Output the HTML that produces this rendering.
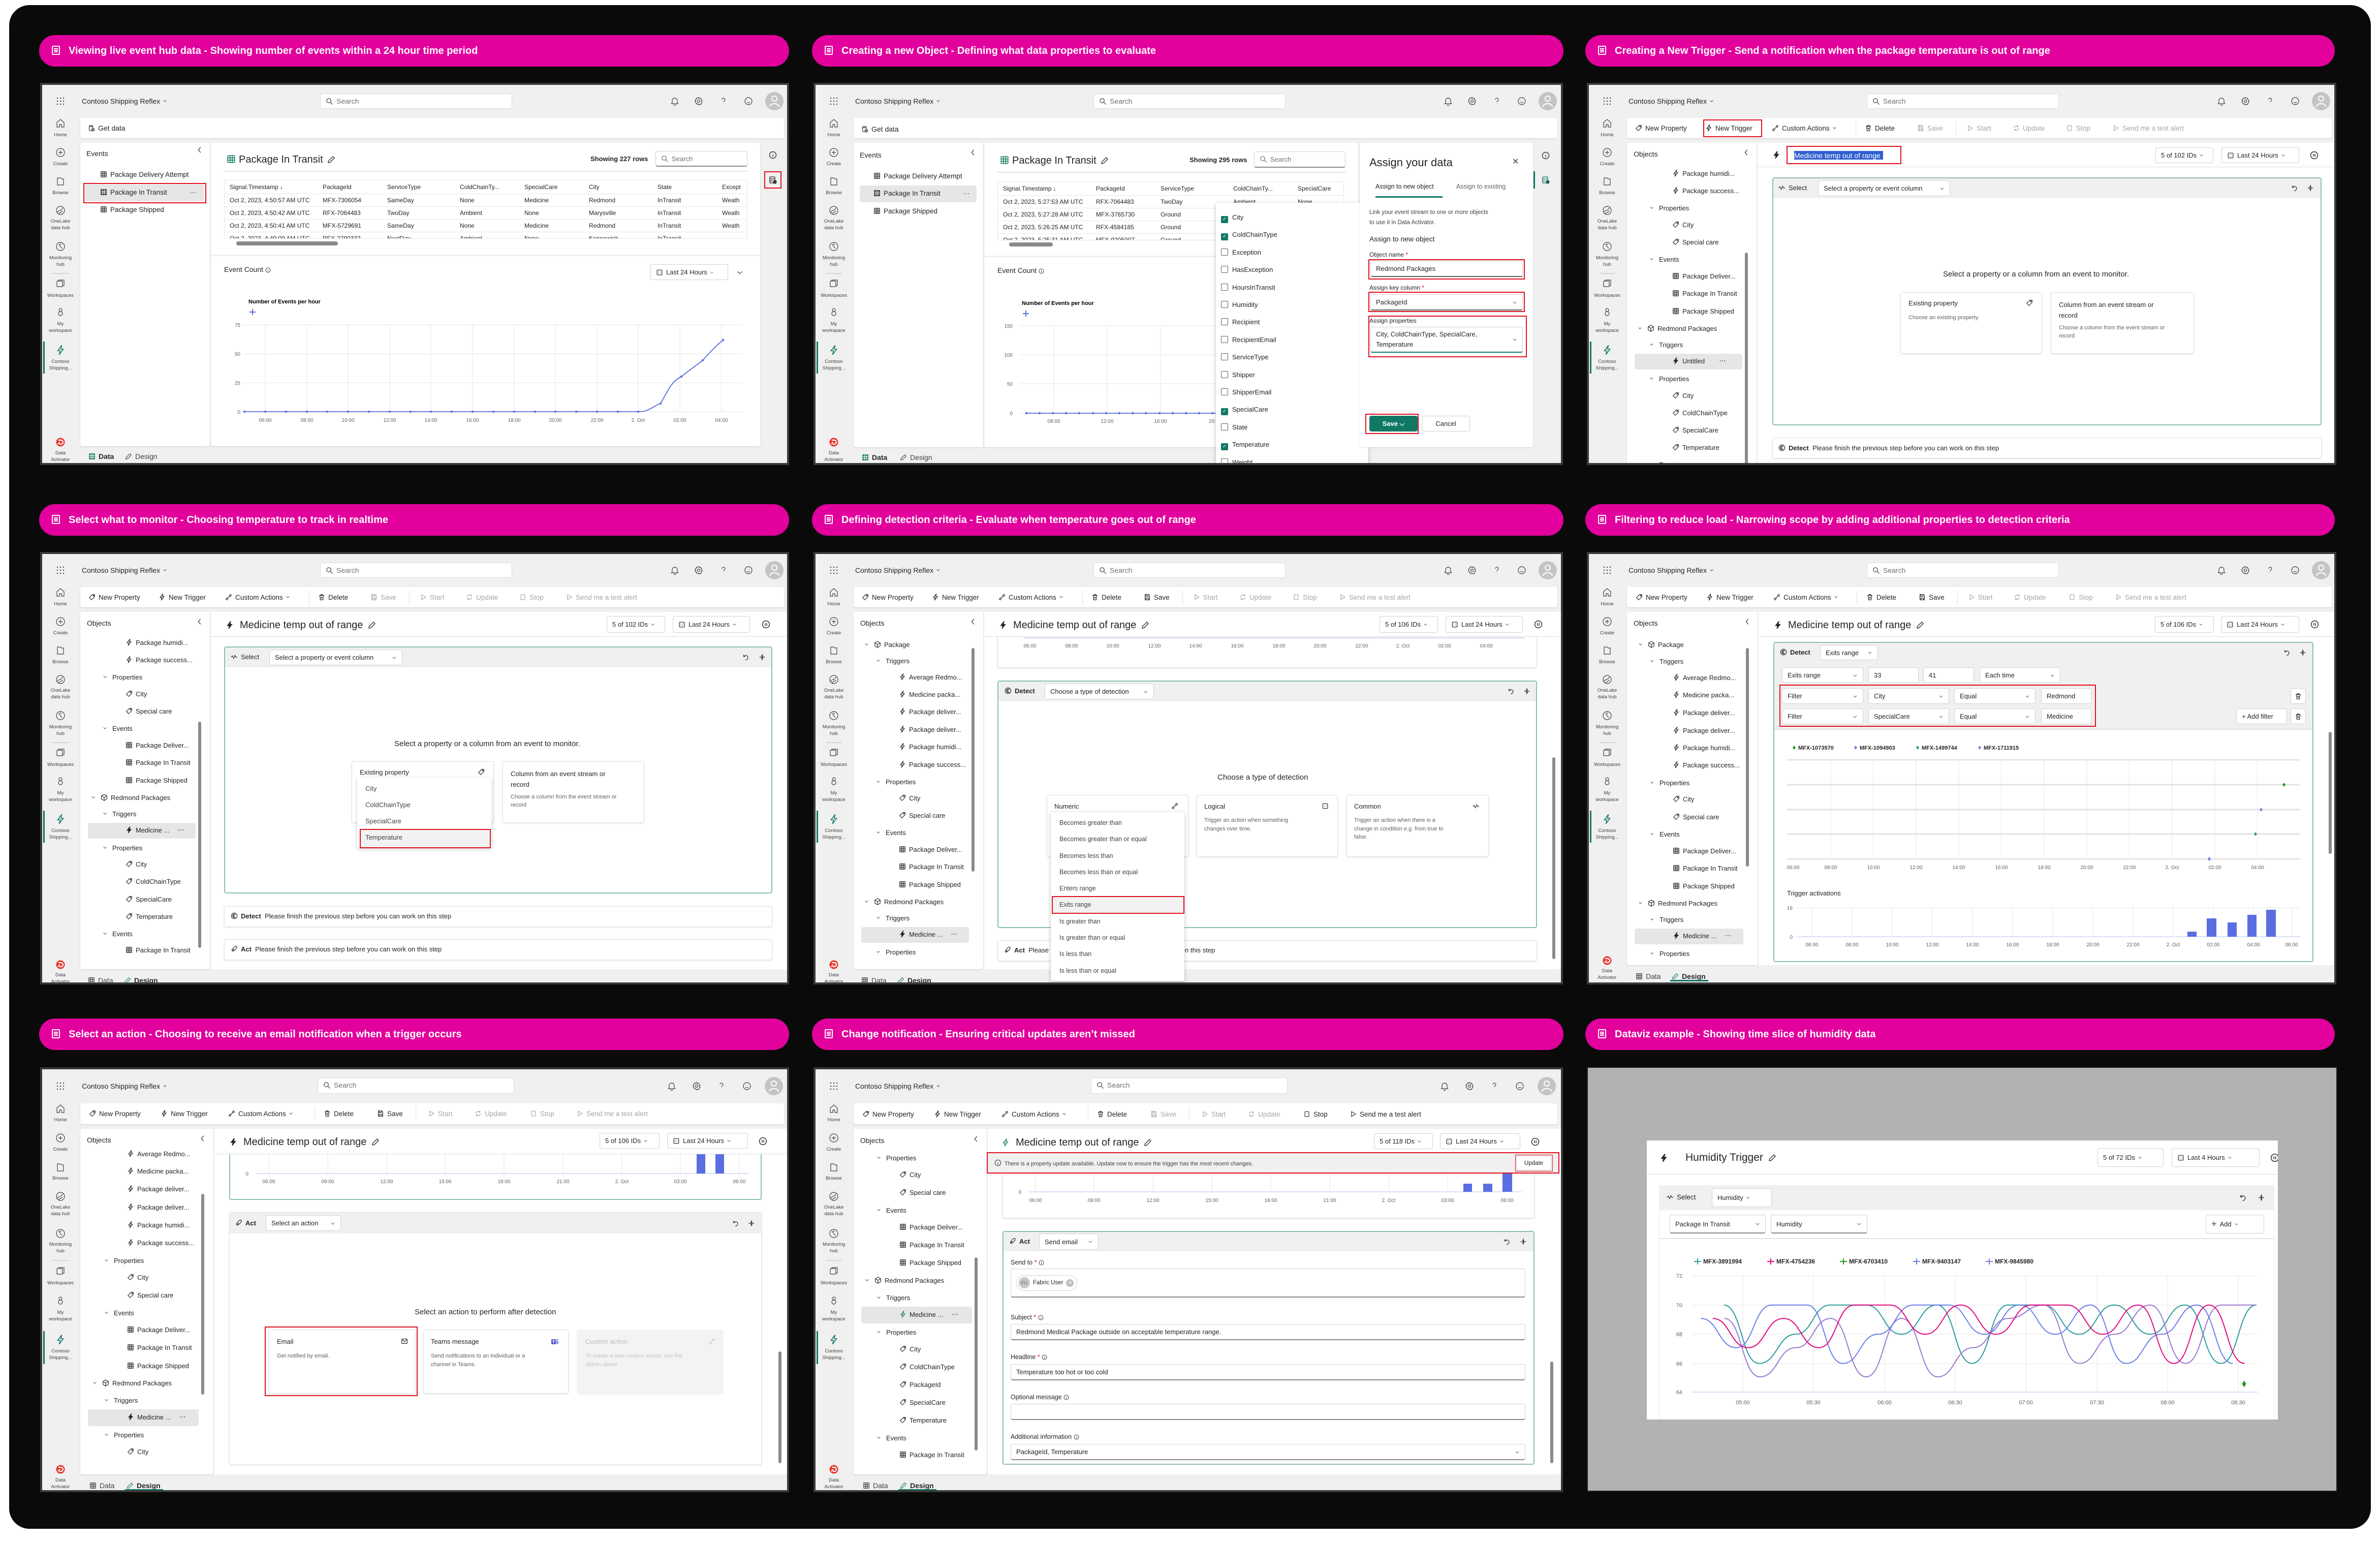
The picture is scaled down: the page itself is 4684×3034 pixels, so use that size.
<!DOCTYPE html>
<html><head><meta charset="utf-8">
<style>
*{box-sizing:border-box}
body{margin:0;width:4684px;height:3034px;background:#fff;position:relative;overflow:hidden;font-family:"Liberation Sans",sans-serif;color:#242424}
.frame{position:absolute;left:18px;top:10px;width:4648px;height:2998px;background:#0a0a0a;border-radius:40px}
.hd{position:absolute;height:62px;border-radius:31px;background:#e2019d;color:#fff;font-weight:bold;font-size:20px;line-height:62px;padding-left:58px;white-space:nowrap}
.hd svg{position:absolute;left:24px;top:20px;width:20px;height:22px;fill:none;stroke:#fff;stroke-width:2}
.pn{position:absolute;background:#f0f0f0;border:4px solid #3a3a3a;overflow:hidden;font-size:13px}
.a{position:absolute}
.t{position:absolute;white-space:nowrap;line-height:16px}
svg{overflow:visible}
.t svg,.i{width:14px;height:14px;fill:none;stroke:currentColor;stroke-width:1.3;vertical-align:-2px;margin-right:6px}
.t svg.ch,.ch{width:9px;height:9px;margin:0 0 0 5px;vertical-align:1px}
.t svg.cl{width:9px;height:9px;margin-right:10px;vertical-align:1px}
.wc{position:absolute;background:#fff;border-radius:4px;box-shadow:0 1px 2px rgba(0,0,0,.14)}
.bx{position:absolute;background:#fff;border:1px solid #d1d1d1;border-radius:4px;white-space:nowrap;padding:0 10px;display:flex;align-items:center;font-size:13px}
.bx .cv{margin-left:auto;width:10px;height:10px;fill:none;stroke:#424242;stroke-width:1.4}
.rb{position:absolute;border:2.5px solid #e3101e}
.nv{position:absolute;left:26px;width:20px;height:20px;fill:none;stroke:#424242;stroke-width:1.2}
.nl{position:absolute;left:0;width:72px;text-align:center;font-size:9.5px;color:#424242;line-height:13px}
.ti{position:absolute;top:23px;width:18px;height:18px;fill:none;stroke:#424242;stroke-width:1.2}
.sb{position:absolute;left:547px;top:17px;width:378px;height:30px;background:#fff;border:1px solid #dcdcdc;border-radius:4px;color:#707070;font-size:14px;line-height:28px;padding-left:10px}
.sb svg{width:15px;height:15px;fill:none;stroke:#424242;stroke-width:1.3;vertical-align:-3px;margin-right:6px}
.av{position:absolute;left:1423px;top:14px;width:36px;height:36px;border-radius:50%;background:#c4c4c4}
.g{color:#a6a6a6}
.sel{position:absolute;left:90px;width:212px;height:31px;background:#e6e6e6;border-radius:4px}
.d{color:#616161;font-size:11px}
.gr{stroke:#e6e6e6;stroke-width:1}
.ax{font-size:10px;fill:#616161;font-family:"Liberation Sans",sans-serif}
.cd{position:absolute;background:#fff;border:1px solid #e3e3e3;border-radius:4px;box-shadow:0 1px 3px rgba(0,0,0,.12)}
.band{position:absolute;background:#f0f0f0}
.b{font-weight:bold}
</style></head><body>
<svg width="0" height="0" style="position:absolute">
<defs>
<symbol id="tag" viewBox="0 0 16 16"><path d="M9 2h5v5l-7 7-5-5z"/><circle cx="11.3" cy="4.7" r=".9"/></symbol>
<symbol id="bolt" viewBox="0 0 16 16"><path d="M9.5 1L3.5 9h4l-1.5 6 6.5-8.5h-4L10 1z"/></symbol>
<symbol id="boltf" viewBox="0 0 16 16"><path d="M9.5 1L3.5 9h4l-1.5 6 6.5-8.5h-4L10 1z" fill="currentColor"/></symbol>
<symbol id="grid" viewBox="0 0 16 16"><rect x="2" y="2" width="12" height="12" rx="1"/><path d="M2 6h12M2 10h12M6 2v12M10 2v12"/></symbol>
<symbol id="gridf" viewBox="0 0 16 16"><rect x="2" y="2" width="12" height="12" rx="1" fill="currentColor"/><path d="M2 6h12M2 10h12M6 2v12M10 2v12" stroke="#fff"/></symbol>
<symbol id="obj" viewBox="0 0 16 16"><path d="M8 1l6 3.5v7L8 15 2 11.5v-7zM2 4.5L8 8l6-3.5M8 8v7"/></symbol>
<symbol id="chev" viewBox="0 0 16 16"><path d="M3 6l5 5 5-5"/></symbol>
<symbol id="chevl" viewBox="0 0 16 16"><path d="M10 2L5 8l5 6"/></symbol>
<symbol id="home" viewBox="0 0 20 20"><path d="M3 9l7-6 7 6v9h-5v-5H8v5H3z"/></symbol>
<symbol id="plus" viewBox="0 0 20 20"><circle cx="10" cy="10" r="8"/><path d="M10 6v8M6 10h8"/></symbol>
<symbol id="browse" viewBox="0 0 20 20"><path d="M4 3h6l2 2h4v12H4z"/></symbol>
<symbol id="lake" viewBox="0 0 20 20"><circle cx="10" cy="10" r="8"/><path d="M4 14c2-6 8-2 10-9M7 17c1-4 6-3 7-6"/></symbol>
<symbol id="mon" viewBox="0 0 20 20"><circle cx="10" cy="10" r="8"/><path d="M7 6l6 8M8 6a3 3 0 014 0"/></symbol>
<symbol id="ws" viewBox="0 0 20 20"><rect x="3" y="5" width="11" height="11" rx="1"/><path d="M6 5V3h11v11h-3"/></symbol>
<symbol id="me" viewBox="0 0 20 20"><circle cx="10" cy="6" r="3"/><circle cx="10" cy="13" r="4"/></symbol>
<symbol id="srch" viewBox="0 0 16 16"><circle cx="6.5" cy="6.5" r="4.5"/><path d="M10 10l4.5 4.5"/></symbol>
<symbol id="bell" viewBox="0 0 18 18"><path d="M4 12V8a5 5 0 0110 0v4l1.5 2h-13zM7 15.5a2 2 0 004 0"/></symbol>
<symbol id="gear" viewBox="0 0 18 18"><circle cx="9" cy="9" r="2.5"/><path d="M9 1.5l1.6 2.2 2.6-.6.6 2.6 2.2 1.6-1.4 2.2 1.4 2.2-2.2 1.6-.6 2.6-2.6-.6L9 16.5l-1.6-2.2-2.6.6-.6-2.6-2.2-1.6L3.4 9 2 6.8l2.2-1.6.6-2.6 2.6.6z"/></symbol>
<symbol id="help" viewBox="0 0 18 18"><path d="M6 6a3 3 0 116 0c0 2-3 2.5-3 5M9 14.5v.5"/></symbol>
<symbol id="smile" viewBox="0 0 18 18"><circle cx="9" cy="9" r="7"/><path d="M6 11c1.5 1.5 4.5 1.5 6 0M6.5 7v.5M11.5 7v.5"/></symbol>
<symbol id="pers" viewBox="0 0 36 36"><circle cx="18" cy="13" r="5"/><path d="M9 29c0-8 18-8 18 0"/></symbol>
<symbol id="waf" viewBox="0 0 16 16"><g fill="currentColor" stroke="none"><circle cx="2" cy="2" r="1.2"/><circle cx="8" cy="2" r="1.2"/><circle cx="14" cy="2" r="1.2"/><circle cx="2" cy="8" r="1.2"/><circle cx="8" cy="8" r="1.2"/><circle cx="14" cy="8" r="1.2"/><circle cx="2" cy="14" r="1.2"/><circle cx="8" cy="14" r="1.2"/><circle cx="14" cy="14" r="1.2"/></g></symbol>
<symbol id="cal" viewBox="0 0 16 16"><rect x="2.5" y="2.5" width="11" height="11" rx="1.5"/><path d="M5.5 6.5h1M9.5 6.5h1M5.5 9.5h1M9.5 9.5h1"/></symbol>
<symbol id="pen" viewBox="0 0 16 16"><path d="M11 2l3 3-8.5 8.5L2 14l.5-3.5z"/></symbol>
<symbol id="trash" viewBox="0 0 16 16"><path d="M2.5 4h11M6 4V2h4v2M4 4l1 10h6l1-10M7 7v4M9 7v4"/></symbol>
<symbol id="disk" viewBox="0 0 16 16"><path d="M3 2h8l2 2v10H3zM5 2v4h5V2M5 14v-4h6v4"/></symbol>
<symbol id="play" viewBox="0 0 16 16"><path d="M4.5 2.5l9 5.5-9 5.5z"/></symbol>
<symbol id="upd" viewBox="0 0 16 16"><path d="M13 8a5 5 0 01-9 3M3 8a5 5 0 019-3M12 2v3H9M4 14v-3h3"/></symbol>
<symbol id="stop" viewBox="0 0 16 16"><rect x="3.5" y="2.5" width="9" height="11" rx="1"/></symbol>
<symbol id="info" viewBox="0 0 16 16"><circle cx="8" cy="8" r="6.5"/><path d="M8 7v4.5M8 4.5v.5"/></symbol>
<symbol id="pause" viewBox="0 0 16 16"><circle cx="8" cy="8" r="6.5"/><path d="M6.5 5.5v5M9.5 5.5v5"/></symbol>
<symbol id="undo" viewBox="0 0 16 16"><path d="M4 2.5v4h4M4.3 6.5A5 5 0 118 14"/></symbol>
<symbol id="coll" viewBox="0 0 16 16"><path d="M8 1v5M6 4.5L8 6.5l2-2M2 8h12M8 15v-5M6 11.5l2-2 2 2"/></symbol>
<symbol id="wave" viewBox="0 0 16 16"><path d="M1 9l2.5-3 3 6 3-7 2 4h3.5"/></symbol>
<symbol id="det" viewBox="0 0 16 16"><circle cx="8" cy="8" r="6.5"/><path d="M11 5a4 4 0 100 6M9.5 6.5a2 2 0 100 3"/></symbol>
<symbol id="act" viewBox="0 0 16 16"><path d="M9 2.5c2.5-1 4.5-.5 4.5-.5s.5 2-.5 4.5L8 11.5 4.5 8zM5 9l-2.5 1.5 1 1M7 11l-1.5 2.5-1-1M3 13l2-2"/></symbol>
<symbol id="custom" viewBox="0 0 16 16"><circle cx="4" cy="12" r="2"/><circle cx="12" cy="4" r="2"/><path d="M5.5 10.5l5-5"/></symbol>
<symbol id="mail" viewBox="0 0 16 16"><rect x="2" y="3" width="12" height="10" rx="1"/><path d="M2 4.5l6 4.5 6-4.5"/></symbol>
<symbol id="db" viewBox="0 0 16 16"><path d="M3 3.5c0-2 8-2 8 0v9c0 2-8 2-8 0zM3 3.5c0 2 8 2 8 0"/><circle cx="11.5" cy="11.5" r="3" fill="#fff"/><path d="M11.5 10v3M10 11.5h3"/></symbol>
<symbol id="tadd" viewBox="0 0 16 16"><rect x="2" y="2" width="10" height="12" rx="1"/><path d="M2 6h10M2 10h6"/><circle cx="12" cy="12" r="3" fill="#424242"/></symbol>
<symbol id="note" viewBox="0 0 20 22"><rect x="2" y="2" width="14" height="16" rx="1"/><path d="M5 7h8M5 10h8M5 13h8"/></symbol>
<symbol id="da" viewBox="0 0 20 20"><circle cx="10" cy="10" r="8.5" fill="#e8372c" stroke="none"/><path d="M6 6h5a4 4 0 010 8H8" stroke="#fff" stroke-width="2.2" fill="none"/><path d="M5 14l4-4" stroke="#fff" stroke-width="2"/></symbol>
<symbol id="dots" viewBox="0 0 16 16"><g fill="currentColor" stroke="none"><circle cx="3" cy="8" r="1"/><circle cx="8" cy="8" r="1"/><circle cx="13" cy="8" r="1"/></g></symbol>
<symbol id="teams" viewBox="0 0 16 16"><rect x="1" y="3" width="9" height="10" rx="1" fill="#5b5fc7" stroke="none"/><path d="M3.5 6h4M5.5 6v5" stroke="#fff" stroke-width="1.4"/><circle cx="12.5" cy="4.5" r="1.8" fill="#7b83eb" stroke="none"/><rect x="10.5" y="7" width="4.5" height="5" rx="1.5" fill="#7b83eb" stroke="none"/></symbol>
</defs></svg>

<div class="frame"></div>

<!-- headers -->
<div class="hd" style="left:77px;top:69px;width:1476px"><svg><use href="#note"/></svg>Viewing live event hub data - Showing number of events within a 24 hour time period</div>
<div class="hd" style="left:1598px;top:69px;width:1479px"><svg><use href="#note"/></svg>Creating a new Object - Defining what data properties to evaluate</div>
<div class="hd" style="left:3120px;top:69px;width:1475px"><svg><use href="#note"/></svg>Creating a New Trigger - Send a notification when the package temperature is out of range</div>
<div class="hd" style="left:77px;top:992px;width:1476px"><svg><use href="#note"/></svg>Select what to monitor - Choosing temperature to track in realtime</div>
<div class="hd" style="left:1598px;top:992px;width:1479px"><svg><use href="#note"/></svg>Defining detection criteria - Evaluate when temperature goes out of range</div>
<div class="hd" style="left:3120px;top:992px;width:1475px"><svg><use href="#note"/></svg>Filtering to reduce load - Narrowing scope by adding additional properties to detection criteria</div>
<div class="hd" style="left:77px;top:2004px;width:1476px"><svg><use href="#note"/></svg>Select an action - Choosing to receive an email notification when a trigger occurs</div>
<div class="hd" style="left:1598px;top:2004px;width:1479px"><svg><use href="#note"/></svg>Change notification - Ensuring critical updates aren’t missed</div>
<div class="hd" style="left:3120px;top:2004px;width:1475px"><svg><use href="#note"/></svg>Dataviz example - Showing time slice of humidity data</div>

<!-- ================= P1 ================= -->
<div class="pn" style="left:79px;top:163px;width:1474px;height:752px">
<svg class="a" style="left:28px;top:24px;width:16px;height:16px;color:#424242"><use href="#waf"/></svg>
<div class="t" style="left:78px;top:24px;font-size:14px">Contoso Shipping Reflex<svg class="ch"><use href="#chev"/></svg></div>
<div class="sb"><svg><use href="#srch"/></svg>Search</div>
<svg class="ti" style="left:1236px"><use href="#bell"/></svg><svg class="ti" style="left:1283px"><use href="#gear"/></svg><svg class="ti" style="left:1332px"><use href="#help"/></svg><svg class="ti" style="left:1381px"><use href="#smile"/></svg>
<div class="av"><svg style="width:36px;height:36px;fill:none;stroke:#fff;stroke-width:2"><use href="#pers"/></svg></div>
<svg class="nv" style="top:65px"><use href="#home"/></svg><div class="nl" style="top:92px">Home</div>
<svg class="nv" style="top:123px"><use href="#plus"/></svg><div class="nl" style="top:149px">Create</div>
<svg class="nv" style="top:180px"><use href="#browse"/></svg><div class="nl" style="top:206px">Browse</div>
<svg class="nv" style="top:237px"><use href="#lake"/></svg><div class="nl" style="top:262px">OneLake<br>data hub</div>
<svg class="nv" style="top:308px"><use href="#mon"/></svg><div class="nl" style="top:334px">Monitoring<br>hub</div>
<div class="a" style="left:20px;top:370px;width:32px;height:2px;background:#d6d6d6"></div>
<svg class="nv" style="top:381px"><use href="#ws"/></svg><div class="nl" style="top:408px">Workspaces</div>
<svg class="nv" style="top:437px"><use href="#me"/></svg><div class="nl" style="top:464px">My<br>workspace</div>
<div class="a" style="left:2px;top:505px;width:3px;height:63px;background:#117865"></div>
<svg class="nv" style="top:512px;stroke:#117865"><use href="#bolt"/></svg><div class="nl" style="top:538px">Contoso<br>Shipping...</div>
<svg class="nv" style="top:693px;stroke:none"><use href="#da"/></svg><div class="nl" style="top:718px">Data<br>Activator</div>

<div class="wc" style="left:75px;top:65px;width:1385px;height:40px"></div>
<div class="t" style="left:90px;top:77px;font-size:14px"><svg><use href="#db"/></svg>Get data</div>
<div class="wc" style="left:75px;top:114px;width:255px;height:597px"></div>
<div class="t" style="left:87px;top:127px;font-size:14px">Events</div>
<svg class="a i" style="left:303px;top:121px"><use href="#chevl"/></svg>
<div class="t" style="left:114px;top:169px;font-size:13.5px"><svg><use href="#grid"/></svg>Package Delivery Attempt</div>
<div class="sel" style="left:84px;top:196px;width:235px;height:33px"></div>
<div class="t" style="left:114px;top:204px;font-size:13.5px"><svg><use href="#gridf"/></svg>Package In Transit</div>
<svg class="a i" style="left:290px;top:205px;color:#424242"><use href="#dots"/></svg>
<div class="rb" style="left:81px;top:193px;width:242px;height:40px"></div>
<div class="t" style="left:114px;top:238px;font-size:13.5px"><svg><use href="#grid"/></svg>Package Shipped</div>

<div class="wc" style="left:332px;top:114px;width:1081px;height:597px"></div>
<div class="t" style="left:363px;top:136px;font-size:20px;line-height:22px"><svg style="width:18px;height:18px;color:#117865"><use href="#grid"/></svg>Package In Transit<svg style="width:16px;height:16px;margin-left:8px"><use href="#pen"/></svg></div>
<div class="t" style="left:1079px;top:138px;font-size:13px;font-weight:bold">Showing 227 rows</div>
<div class="bx" style="left:1207px;top:130px;width:181px;height:31px;color:#707070;border-bottom:2px solid #8a8a8a"><svg class="i" style="width:15px;height:15px"><use href="#srch"/></svg>Search</div>
<div class="a" style="left:358px;top:169px;width:1030px;height:2px;background:#e3e3e3"></div>
<div class="a" style="left:358px;top:187px;width:1030px;height:116px;border:1px solid #e6e6e6;overflow:hidden;font-size:12px;background:#fff">
<div class="a" style="left:0;top:26px;width:1030px;height:1px;background:#e6e6e6"></div>
<div class="a" style="left:0;top:51px;width:1030px;height:1px;background:#e6e6e6"></div>
<div class="a" style="left:0;top:76px;width:1030px;height:1px;background:#e6e6e6"></div>
<div class="a" style="left:0;top:101px;width:1030px;height:1px;background:#e6e6e6"></div>
<div class="t" style="left:10px;top:5px">Signal.Timestamp ↓</div><div class="t" style="left:193px;top:5px">PackageId</div><div class="t" style="left:320px;top:5px">ServiceType</div><div class="t" style="left:463px;top:5px">ColdChainTy...</div><div class="t" style="left:590px;top:5px">SpecialCare</div><div class="t" style="left:717px;top:5px">City</div><div class="t" style="left:852px;top:5px">State</div><div class="t" style="left:979px;top:5px">Except</div>
<div class="t" style="left:10px;top:31px">Oct 2, 2023, 4:50:57 AM UTC</div><div class="t" style="left:193px;top:31px">MFX-7306054</div><div class="t" style="left:320px;top:31px">SameDay</div><div class="t" style="left:463px;top:31px">None</div><div class="t" style="left:590px;top:31px">Medicine</div><div class="t" style="left:717px;top:31px">Redmond</div><div class="t" style="left:852px;top:31px">InTransit</div><div class="t" style="left:979px;top:31px">Weath</div>
<div class="t" style="left:10px;top:56px">Oct 2, 2023, 4:50:42 AM UTC</div><div class="t" style="left:193px;top:56px">RFX-7064483</div><div class="t" style="left:320px;top:56px">TwoDay</div><div class="t" style="left:463px;top:56px">Ambient</div><div class="t" style="left:590px;top:56px">None</div><div class="t" style="left:717px;top:56px">Marysville</div><div class="t" style="left:852px;top:56px">InTransit</div><div class="t" style="left:979px;top:56px">Weath</div>
<div class="t" style="left:10px;top:81px">Oct 2, 2023, 4:50:41 AM UTC</div><div class="t" style="left:193px;top:81px">MFX-5729691</div><div class="t" style="left:320px;top:81px">SameDay</div><div class="t" style="left:463px;top:81px">None</div><div class="t" style="left:590px;top:81px">Medicine</div><div class="t" style="left:717px;top:81px">Redmond</div><div class="t" style="left:852px;top:81px">InTransit</div><div class="t" style="left:979px;top:81px">Weath</div>
<div class="t" style="left:10px;top:106px">Oct 2, 2023, 4:49:09 AM UTC</div><div class="t" style="left:193px;top:106px">RFX-2790332</div><div class="t" style="left:320px;top:106px">NextDay</div><div class="t" style="left:463px;top:106px">Ambient</div><div class="t" style="left:590px;top:106px">None</div><div class="t" style="left:717px;top:106px">Kennewick</div><div class="t" style="left:852px;top:106px">InTransit</div>
</div>
<div class="a" style="left:382px;top:308px;width:200px;height:8px;border-radius:4px;background:#8a8a8a"></div>
<div class="a" style="left:332px;top:334px;width:1081px;height:3px;background:#f0f0f0"></div>
<div class="t" style="left:358px;top:355px;font-size:14px">Event Count <svg class="i" style="width:11px;height:11px"><use href="#info"/></svg></div>
<div class="bx" style="left:1197px;top:353px;width:153px;height:31px"><svg class="i"><use href="#cal"/></svg>Last 24 Hours<svg class="ch" style="width:8px;height:8px;fill:none;stroke:#424242;stroke-width:1.4"><use href="#chev"/></svg></div>
<svg class="a i" style="left:1366px;top:362px"><use href="#chev"/></svg>
<svg class="a" style="left:0;top:0;width:1474px;height:752px" viewBox="0 0 1474 752">
<text x="406" y="430" style="font:bold 11px 'Liberation Sans',sans-serif">Number of Events per hour</text>
<path d="M408 447h12M414 441v12" stroke="#5b6ee1" stroke-width="2"/>
<g class="gr"><path d="M396 472H1378M396 529H1378M396 586H1378M396 643H1378"/>
<path d="M439 472V643M521 472V643M602 472V643M684 472V643M765 472V643M847 472V643M929 472V643M1010 472V643M1092 472V643M1173 472V643M1255 472V643M1337 472V643"/></g>
<g class="ax" text-anchor="end"><text x="390" y="476">75</text><text x="390" y="533">50</text><text x="390" y="590">25</text><text x="390" y="647">0</text></g>
<g class="ax" text-anchor="middle"><text x="439" y="663">06:00</text><text x="521" y="663">08:00</text><text x="602" y="663">10:00</text><text x="684" y="663">12:00</text><text x="765" y="663">14:00</text><text x="847" y="663">16:00</text><text x="929" y="663">18:00</text><text x="1010" y="663">20:00</text><text x="1092" y="663">22:00</text><text x="1173" y="663">2. Oct</text><text x="1255" y="663">02:00</text><text x="1337" y="663">04:00</text></g>
<path d="M398 643H1176C1195 643 1205 630 1217 627C1232 600 1240 582 1258 574C1275 560 1290 550 1300 542C1315 525 1328 512 1340 502" fill="none" stroke="#5b6ee1" stroke-width="1.8"/>
<g fill="#5b6ee1"><circle cx="398" cy="643" r="2.2"/><circle cx="439" cy="643" r="2.2"/><circle cx="480" cy="643" r="2.2"/><circle cx="521" cy="643" r="2.2"/><circle cx="561" cy="643" r="2.2"/><circle cx="602" cy="643" r="2.2"/><circle cx="643" cy="643" r="2.2"/><circle cx="684" cy="643" r="2.2"/><circle cx="725" cy="643" r="2.2"/><circle cx="765" cy="643" r="2.2"/><circle cx="806" cy="643" r="2.2"/><circle cx="847" cy="643" r="2.2"/><circle cx="888" cy="643" r="2.2"/><circle cx="929" cy="643" r="2.2"/><circle cx="970" cy="643" r="2.2"/><circle cx="1010" cy="643" r="2.2"/><circle cx="1051" cy="643" r="2.2"/><circle cx="1092" cy="643" r="2.2"/><circle cx="1133" cy="643" r="2.2"/><circle cx="1173" cy="643" r="2.2"/><circle cx="1217" cy="627" r="2.2"/><circle cx="1258" cy="574" r="2.2"/><circle cx="1300" cy="542" r="2.2"/><circle cx="1340" cy="502" r="2.2"/></g>
</svg>
<svg class="a i" style="left:1430px;top:130px;width:16px;height:16px"><use href="#info"/></svg>
<svg class="a i" style="left:1430px;top:179px;width:16px;height:16px"><use href="#tadd"/></svg>
<div class="rb" style="left:1421px;top:170px;width:34px;height:34px"></div>
<div class="t" style="left:91px;top:723px;font-size:14px;font-weight:bold"><svg style="color:#117865"><use href="#gridf"/></svg>Data</div>
<div class="t" style="left:163px;top:723px;font-size:14px;color:#424242"><svg><use href="#pen"/></svg>Design</div>
<div class="a" style="left:87px;top:744px;width:58px;height:3px;background:#117865"></div>
</div>

<!-- ================= P2 ================= -->
<div class="pn" style="left:1601px;top:163px;width:1475px;height:752px">
<svg class="a" style="left:28px;top:24px;width:16px;height:16px;color:#424242"><use href="#waf"/></svg>
<div class="t" style="left:78px;top:24px;font-size:14px">Contoso Shipping Reflex<svg class="ch"><use href="#chev"/></svg></div>
<div class="sb"><svg><use href="#srch"/></svg>Search</div>
<svg class="ti" style="left:1236px"><use href="#bell"/></svg><svg class="ti" style="left:1283px"><use href="#gear"/></svg><svg class="ti" style="left:1332px"><use href="#help"/></svg><svg class="ti" style="left:1381px"><use href="#smile"/></svg>
<div class="av"><svg style="width:36px;height:36px;fill:none;stroke:#fff;stroke-width:2"><use href="#pers"/></svg></div>
<svg class="nv" style="top:65px"><use href="#home"/></svg><div class="nl" style="top:92px">Home</div>
<svg class="nv" style="top:123px"><use href="#plus"/></svg><div class="nl" style="top:149px">Create</div>
<svg class="nv" style="top:180px"><use href="#browse"/></svg><div class="nl" style="top:206px">Browse</div>
<svg class="nv" style="top:237px"><use href="#lake"/></svg><div class="nl" style="top:262px">OneLake<br>data hub</div>
<svg class="nv" style="top:308px"><use href="#mon"/></svg><div class="nl" style="top:334px">Monitoring<br>hub</div>
<div class="a" style="left:20px;top:370px;width:32px;height:2px;background:#d6d6d6"></div>
<svg class="nv" style="top:381px"><use href="#ws"/></svg><div class="nl" style="top:408px">Workspaces</div>
<svg class="nv" style="top:437px"><use href="#me"/></svg><div class="nl" style="top:464px">My<br>workspace</div>
<div class="a" style="left:2px;top:505px;width:3px;height:63px;background:#117865"></div>
<svg class="nv" style="top:512px;stroke:#117865"><use href="#bolt"/></svg><div class="nl" style="top:538px">Contoso<br>Shipping...</div>
<svg class="nv" style="top:693px;stroke:none"><use href="#da"/></svg><div class="nl" style="top:718px">Data<br>Activator</div>

<div class="wc" style="left:75px;top:65px;width:1385px;height:40px"></div>
<div class="t" style="left:90px;top:79px;font-size:14px"><svg><use href="#db"/></svg>Get data</div>
<div class="wc" style="left:75px;top:114px;width:255px;height:599px"></div>
<div class="t" style="left:87px;top:130px;font-size:14px">Events</div>
<svg class="a i" style="left:303px;top:126px"><use href="#chevl"/></svg>
<div class="t" style="left:114px;top:172px;font-size:13.5px"><svg><use href="#grid"/></svg>Package Delivery Attempt</div>
<div class="sel" style="left:87px;top:198px;width:230px;height:33px"></div>
<div class="t" style="left:114px;top:206px;font-size:13.5px"><svg><use href="#gridf"/></svg>Package In Transit</div>
<svg class="a i" style="left:290px;top:207px;color:#424242"><use href="#dots"/></svg>
<div class="t" style="left:114px;top:241px;font-size:13.5px"><svg><use href="#grid"/></svg>Package Shipped</div>
<div class="wc" style="left:332px;top:114px;width:736px;height:599px"></div>
<div class="t" style="left:363px;top:138px;font-size:20px;line-height:22px"><svg style="width:18px;height:18px;color:#117865"><use href="#grid"/></svg>Package In Transit<svg style="width:16px;height:16px;margin-left:8px"><use href="#pen"/></svg></div>
<div class="t" style="left:736px;top:140px;font-size:13px;font-weight:bold">Showing 295 rows</div>
<div class="bx" style="left:863px;top:131px;width:180px;height:32px;color:#707070;border-bottom:2px solid #8a8a8a"><svg class="i" style="width:15px;height:15px"><use href="#srch"/></svg>Search</div>
<div class="a" style="left:358px;top:171px;width:685px;height:2px;background:#e3e3e3"></div>
<div class="a" style="left:358px;top:190px;width:682px;height:116px;border:1px solid #e6e6e6;overflow:hidden;font-size:12px;background:#fff">
<div class="a" style="left:0;top:26px;width:700px;height:1px;background:#e6e6e6"></div><div class="a" style="left:0;top:51px;width:700px;height:1px;background:#e6e6e6"></div><div class="a" style="left:0;top:76px;width:700px;height:1px;background:#e6e6e6"></div><div class="a" style="left:0;top:101px;width:700px;height:1px;background:#e6e6e6"></div>
<div class="t" style="left:10px;top:5px">Signal.Timestamp ↓</div><div class="t" style="left:193px;top:5px">PackageId</div><div class="t" style="left:320px;top:5px">ServiceType</div><div class="t" style="left:463px;top:5px">ColdChainTy...</div><div class="t" style="left:590px;top:5px">SpecialCare</div>
<div class="t" style="left:10px;top:31px">Oct 2, 2023, 5:27:53 AM UTC</div><div class="t" style="left:193px;top:31px">RFX-7064483</div><div class="t" style="left:320px;top:31px">TwoDay</div><div class="t" style="left:463px;top:31px">Ambient</div><div class="t" style="left:590px;top:31px">None</div>
<div class="t" style="left:10px;top:56px">Oct 2, 2023, 5:27:28 AM UTC</div><div class="t" style="left:193px;top:56px">MFX-3765730</div><div class="t" style="left:320px;top:56px">Ground</div>
<div class="t" style="left:10px;top:81px">Oct 2, 2023, 5:26:25 AM UTC</div><div class="t" style="left:193px;top:81px">RFX-4584185</div><div class="t" style="left:320px;top:81px">Ground</div>
<div class="t" style="left:10px;top:106px">Oct 2, 2023, 5:25:31 AM UTC</div><div class="t" style="left:193px;top:106px">MFX-9205007</div><div class="t" style="left:320px;top:106px">Ground</div>
</div>
<div class="a" style="left:381px;top:310px;width:86px;height:8px;border-radius:4px;background:#8a8a8a"></div>
<div class="a" style="left:332px;top:336px;width:736px;height:3px;background:#f0f0f0"></div>
<div class="t" style="left:358px;top:357px;font-size:14px">Event Count <svg class="i" style="width:11px;height:11px"><use href="#info"/></svg></div>
<svg class="a" style="left:0;top:0;width:1475px;height:752px" viewBox="0 0 1475 752">
<text x="406" y="433" style="font:bold 11px 'Liberation Sans',sans-serif">Number of Events per hour</text>
<path d="M408 450h12M414 444v12" stroke="#5b6ee1" stroke-width="2"/>
<g class="gr"><path d="M402 474H790M402 531H790M402 588H790M402 646H790M469 474V646M574 474V646M679 474V646"/></g>
<g class="ax" text-anchor="end"><text x="388" y="478">150</text><text x="388" y="535">100</text><text x="388" y="592">50</text><text x="388" y="650">0</text></g>
<g class="ax" text-anchor="middle"><text x="469" y="665">08:00</text><text x="574" y="665">12:00</text><text x="679" y="665">16:00</text><text x="781" y="665">20:</text></g>
<path d="M415 646H788" stroke="#5b6ee1" stroke-width="1.8"/>
<g fill="#5b6ee1"><circle cx="415" cy="646" r="2.2"/><circle cx="441" cy="646" r="2.2"/><circle cx="467" cy="646" r="2.2"/><circle cx="493" cy="646" r="2.2"/><circle cx="519" cy="646" r="2.2"/><circle cx="546" cy="646" r="2.2"/><circle cx="572" cy="646" r="2.2"/><circle cx="598" cy="646" r="2.2"/><circle cx="624" cy="646" r="2.2"/><circle cx="650" cy="646" r="2.2"/><circle cx="677" cy="646" r="2.2"/><circle cx="703" cy="646" r="2.2"/><circle cx="729" cy="646" r="2.2"/><circle cx="755" cy="646" r="2.2"/><circle cx="781" cy="646" r="2.2"/></g>
</svg>
<!-- checkbox dropdown -->
<div class="a" style="left:788px;top:232px;width:300px;height:530px;background:#fff;box-shadow:0 2px 8px rgba(0,0,0,.25);border-radius:4px"></div>
<div class="a" style="left:798px;top:244px;font-size:13px;line-height:34.4px">
<div><span style="display:inline-block;width:14px;height:14px;background:#117865;border-radius:2px;vertical-align:-2px;margin-right:8px;color:#fff;font-size:10px;line-height:14px;text-align:center">✓</span>City</div>
<div><span style="display:inline-block;width:14px;height:14px;background:#117865;border-radius:2px;vertical-align:-2px;margin-right:8px;color:#fff;font-size:10px;line-height:14px;text-align:center">✓</span>ColdChainType</div>
<div><span style="display:inline-block;width:14px;height:14px;border:1px solid #616161;border-radius:2px;vertical-align:-2px;margin-right:8px"></span>Exception</div>
<div><span style="display:inline-block;width:14px;height:14px;border:1px solid #616161;border-radius:2px;vertical-align:-2px;margin-right:8px"></span>HasException</div>
<div><span style="display:inline-block;width:14px;height:14px;border:1px solid #616161;border-radius:2px;vertical-align:-2px;margin-right:8px"></span>HoursInTransit</div>
<div><span style="display:inline-block;width:14px;height:14px;border:1px solid #616161;border-radius:2px;vertical-align:-2px;margin-right:8px"></span>Humidity</div>
<div><span style="display:inline-block;width:14px;height:14px;border:1px solid #616161;border-radius:2px;vertical-align:-2px;margin-right:8px"></span>Recipient</div>
<div><span style="display:inline-block;width:14px;height:14px;border:1px solid #616161;border-radius:2px;vertical-align:-2px;margin-right:8px"></span>RecipientEmail</div>
<div><span style="display:inline-block;width:14px;height:14px;border:1px solid #616161;border-radius:2px;vertical-align:-2px;margin-right:8px"></span>ServiceType</div>
<div><span style="display:inline-block;width:14px;height:14px;border:1px solid #616161;border-radius:2px;vertical-align:-2px;margin-right:8px"></span>Shipper</div>
<div><span style="display:inline-block;width:14px;height:14px;border:1px solid #616161;border-radius:2px;vertical-align:-2px;margin-right:8px"></span>ShipperEmail</div>
<div><span style="display:inline-block;width:14px;height:14px;background:#117865;border-radius:2px;vertical-align:-2px;margin-right:8px;color:#fff;font-size:10px;line-height:14px;text-align:center">✓</span>SpecialCare</div>
<div><span style="display:inline-block;width:14px;height:14px;border:1px solid #616161;border-radius:2px;vertical-align:-2px;margin-right:8px"></span>State</div>
<div><span style="display:inline-block;width:14px;height:14px;background:#117865;border-radius:2px;vertical-align:-2px;margin-right:8px;color:#fff;font-size:10px;line-height:14px;text-align:center">✓</span>Temperature</div>
<div><span style="display:inline-block;width:14px;height:14px;border:1px solid #616161;border-radius:2px;vertical-align:-2px;margin-right:8px"></span>Weight</div>
</div>
<!-- assign panel -->
<div class="wc" style="left:1071px;top:114px;width:341px;height:599px"></div>
<div class="t" style="left:1090px;top:141px;font-size:22px;line-height:24px">Assign your data</div>
<div class="t" style="left:1371px;top:144px;font-size:16px;color:#424242">✕</div>
<div class="t" style="left:1102px;top:192px;font-size:12.5px">Assign to new object</div>
<div class="t" style="left:1261px;top:192px;font-size:12.5px;color:#616161">Assign to existing</div>
<div class="a" style="left:1102px;top:219px;width:132px;height:3px;background:#117865"></div>
<div class="t" style="left:1090px;top:241px;font-size:11.5px;color:#424242;line-height:20px">Link your event stream to one or more objects<br>to use it in Data Activator.</div>
<div class="t" style="left:1090px;top:295px;font-size:14px">Assign to new object</div>
<div class="t" style="left:1090px;top:326px;font-size:12px">Object name <span style="color:#c50f1f">*</span></div>
<div class="bx" style="left:1092px;top:346px;width:300px;height:32px;border-bottom:2px solid #616161">Redmond Packages</div>
<div class="rb" style="left:1088px;top:343px;width:308px;height:40px"></div>
<div class="t" style="left:1090px;top:391px;font-size:12px">Assign key column <span style="color:#c50f1f">*</span></div>
<div class="bx" style="left:1092px;top:412px;width:300px;height:32px;border-bottom:2px solid #616161">PackageId<svg class="cv"><use href="#chev"/></svg></div>
<div class="rb" style="left:1088px;top:407px;width:308px;height:40px"></div>
<div class="t" style="left:1090px;top:456px;font-size:12px">Assign properties</div>
<div class="bx" style="left:1092px;top:476px;width:300px;height:51px;border-bottom:2px solid #117865;line-height:20px">City, ColdChainType, SpecialCare,<br>Temperature<svg class="cv"><use href="#chev"/></svg></div>
<div class="rb" style="left:1088px;top:454px;width:312px;height:82px"></div>
<div class="a" style="left:1090px;top:651px;width:95px;height:31px;background:#117865;border-radius:4px;color:#fff;font-size:13px;font-weight:bold;line-height:31px;text-align:center">Save ⌵</div>
<div class="rb" style="left:1082px;top:647px;width:105px;height:40px"></div>
<div class="bx" style="left:1193px;top:651px;width:95px;height:31px;justify-content:center">Cancel</div>
<svg class="a i" style="left:1429px;top:131px;width:16px;height:16px"><use href="#info"/></svg>
<div class="a" style="left:1413px;top:170px;width:3px;height:34px;background:#117865"></div>
<svg class="a i" style="left:1429px;top:179px;width:16px;height:16px;color:#117865"><use href="#tadd"/></svg>
<div class="t" style="left:91px;top:725px;font-size:14px;font-weight:bold"><svg style="color:#117865"><use href="#gridf"/></svg>Data</div>
<div class="t" style="left:166px;top:725px;font-size:14px;color:#424242"><svg><use href="#pen"/></svg>Design</div>
<div class="a" style="left:87px;top:746px;width:59px;height:3px;background:#117865"></div>
</div>

<!-- ================= P3 ================= -->
<div class="pn" style="left:3123px;top:163px;width:1475px;height:752px">
<svg class="a" style="left:28px;top:24px;width:16px;height:16px;color:#424242"><use href="#waf"/></svg>
<div class="t" style="left:78px;top:24px;font-size:14px">Contoso Shipping Reflex<svg class="ch"><use href="#chev"/></svg></div>
<div class="sb"><svg><use href="#srch"/></svg>Search</div>
<svg class="ti" style="left:1236px"><use href="#bell"/></svg><svg class="ti" style="left:1283px"><use href="#gear"/></svg><svg class="ti" style="left:1332px"><use href="#help"/></svg><svg class="ti" style="left:1381px"><use href="#smile"/></svg>
<div class="av"><svg style="width:36px;height:36px;fill:none;stroke:#fff;stroke-width:2"><use href="#pers"/></svg></div>
<svg class="nv" style="top:65px"><use href="#home"/></svg><div class="nl" style="top:92px">Home</div>
<svg class="nv" style="top:123px"><use href="#plus"/></svg><div class="nl" style="top:149px">Create</div>
<svg class="nv" style="top:180px"><use href="#browse"/></svg><div class="nl" style="top:206px">Browse</div>
<svg class="nv" style="top:237px"><use href="#lake"/></svg><div class="nl" style="top:262px">OneLake<br>data hub</div>
<svg class="nv" style="top:308px"><use href="#mon"/></svg><div class="nl" style="top:334px">Monitoring<br>hub</div>
<div class="a" style="left:20px;top:370px;width:32px;height:2px;background:#d6d6d6"></div>
<svg class="nv" style="top:381px"><use href="#ws"/></svg><div class="nl" style="top:408px">Workspaces</div>
<svg class="nv" style="top:437px"><use href="#me"/></svg><div class="nl" style="top:464px">My<br>workspace</div>
<div class="a" style="left:2px;top:505px;width:3px;height:63px;background:#117865"></div>
<svg class="nv" style="top:512px;stroke:#117865"><use href="#bolt"/></svg><div class="nl" style="top:538px">Contoso<br>Shipping...</div>
<div class="wc" style="left:75px;top:65px;width:1388px;height:40px"></div>
<div class="t" style="left:91px;top:78px;font-size:13.5px"><svg><use href="#tag"/></svg>New Property</div>
<div class="t" style="left:229px;top:78px;font-size:13.5px"><svg><use href="#bolt"/></svg>New Trigger</div>
<div class="rb" style="left:225px;top:68px;width:116px;height:35px"></div>
<div class="t" style="left:360px;top:78px;font-size:13.5px"><svg><use href="#custom"/></svg>Custom Actions<svg class="ch"><use href="#chev"/></svg></div>
<div class="a" style="left:525px;top:72px;width:1px;height:28px;background:#e0e0e0"></div>
<div class="t" style="left:543px;top:78px;font-size:13.5px"><svg><use href="#trash"/></svg>Delete</div>
<div class="t g" style="left:646px;top:78px;font-size:13.5px"><svg><use href="#disk"/></svg>Save</div>
<div class="a" style="left:722px;top:72px;width:1px;height:28px;background:#e0e0e0"></div>
<div class="t g" style="left:743px;top:78px;font-size:13.5px"><svg><use href="#play"/></svg>Start</div>
<div class="t g" style="left:834px;top:78px;font-size:13.5px"><svg><use href="#upd"/></svg>Update</div>
<div class="t g" style="left:939px;top:78px;font-size:13.5px"><svg><use href="#stop"/></svg>Stop</div>
<div class="t g" style="left:1030px;top:78px;font-size:13.5px"><svg><use href="#play"/></svg>Send me a test alert</div>
<div class="wc" style="left:75px;top:114px;width:255px;height:650px"></div>
<div class="t" style="left:88px;top:128px;font-size:14px">Objects</div>
<svg class="a i" style="left:303px;top:126px"><use href="#chevl"/></svg>
<div class="a" style="left:307px;top:330px;width:6px;height:430px;border-radius:3px;background:#8a8a8a"></div>
<div class="sel" style="top:529px"></div>
<div class="a" style="font-size:13px">
<div class="t" style="left:164px;top:167px"><svg><use href="#bolt"/></svg>Package humidi...</div>
<div class="t" style="left:164px;top:201px"><svg><use href="#bolt"/></svg>Package success...</div>
<div class="t" style="left:119px;top:235px"><svg class="cl"><use href="#chev"/></svg>Properties</div>
<div class="t" style="left:164px;top:268px"><svg><use href="#tag"/></svg>City</div>
<div class="t" style="left:164px;top:302px"><svg><use href="#tag"/></svg>Special care</div>
<div class="t" style="left:119px;top:336px"><svg class="cl"><use href="#chev"/></svg>Events</div>
<div class="t" style="left:164px;top:369px"><svg><use href="#grid"/></svg>Package Deliver...</div>
<div class="t" style="left:164px;top:403px"><svg><use href="#grid"/></svg>Package In Transit</div>
<div class="t" style="left:164px;top:438px"><svg><use href="#grid"/></svg>Package Shipped</div>
<div class="t" style="left:96px;top:472px"><svg class="cl"><use href="#chev"/></svg><svg><use href="#obj"/></svg>Redmond Packages</div>
<div class="t" style="left:119px;top:504px"><svg class="cl"><use href="#chev"/></svg>Triggers</div>
<div class="t" style="left:164px;top:536px"><svg><use href="#boltf"/></svg>Untitled<svg style="margin-left:28px"><use href="#dots"/></svg></div>
<div class="t" style="left:119px;top:571px"><svg class="cl"><use href="#chev"/></svg>Properties</div>
<div class="t" style="left:164px;top:604px"><svg><use href="#tag"/></svg>City</div>
<div class="t" style="left:164px;top:638px"><svg><use href="#tag"/></svg>ColdChainType</div>
<div class="t" style="left:164px;top:672px"><svg><use href="#tag"/></svg>SpecialCare</div>
<div class="t" style="left:164px;top:706px"><svg><use href="#tag"/></svg>Temperature</div>
<div class="t" style="left:119px;top:740px"><svg class="cl"><use href="#chev"/></svg>Events</div>
</div>
<div class="a" style="left:332px;top:114px;width:1135px;height:650px;background:#fff"></div>
<div class="a" style="left:332px;top:161px;width:1135px;height:1px;background:#e0e0e0"></div>
<svg class="a i" style="left:361px;top:130px;width:16px;height:16px"><use href="#boltf"/></svg>
<div class="a" style="left:404px;top:130px;width:175px;height:17px;background:#2f5fd0"></div>
<div class="t" style="left:404px;top:131px;font-size:14px;color:#fff">Medicine temp out of range</div>
<div class="rb" style="left:389px;top:120px;width:226px;height:36px"></div>
<div class="bx" style="left:1115px;top:123px;width:114px;height:31px">5 of 102 IDs<svg class="ch" style="fill:none;stroke:#424242;stroke-width:1.4"><use href="#chev"/></svg></div>
<div class="bx" style="left:1245px;top:123px;width:153px;height:31px"><svg class="i"><use href="#cal"/></svg>Last 24 Hours<svg class="ch" style="fill:none;stroke:#424242;stroke-width:1.4"><use href="#chev"/></svg></div>
<svg class="a i" style="left:1419px;top:130px;width:17px;height:17px"><use href="#pause"/></svg>
<div class="a" style="left:361px;top:182px;width:1081px;height:488px;border:2px solid #8cbfb3;border-radius:4px"></div>
<div class="band" style="left:363px;top:184px;width:1077px;height:39px"></div>
<div class="t" style="left:373px;top:195px;font-size:13px"><svg><use href="#wave"/></svg>Select</div>
<div class="bx" style="left:451px;top:188px;width:260px;height:31px">Select a property or event column<svg class="cv"><use href="#chev"/></svg></div>
<svg class="a i" style="left:1381px;top:196px"><use href="#undo"/></svg><svg class="a i" style="left:1413px;top:196px"><use href="#coll"/></svg>
<div class="t" style="left:697px;top:365px;font-size:15px">Select a property or a column from an event to monitor.</div>
<div class="cd" style="left:613px;top:408px;width:279px;height:121px"></div>
<div class="t" style="left:629px;top:422px;font-size:13px">Existing property</div><svg class="a i" style="left:860px;top:422px"><use href="#tag"/></svg>
<div class="t d" style="left:629px;top:450px">Choose an existing property.</div>
<div class="cd" style="left:909px;top:408px;width:282px;height:121px"></div>
<div class="t" style="left:925px;top:422px;font-size:13px;line-height:21px">Column from an event stream or<br>record</div>
<div class="t d" style="left:925px;top:470px;line-height:16px">Choose a column from the event stream or<br>record</div>
<div class="cd" style="left:361px;top:694px;width:1081px;height:41px"></div>
<div class="t" style="left:373px;top:707px;font-size:13px"><svg><use href="#det"/></svg><b>Detect</b>&nbsp; Please finish the previous step before you can work on this step</div>
</div>

<!-- ================= P4 ================= -->
<div class="pn" style="left:79px;top:1086px;width:1474px;height:851px">
<svg class="a" style="left:28px;top:24px;width:16px;height:16px;color:#424242"><use href="#waf"/></svg>
<div class="t" style="left:78px;top:24px;font-size:14px">Contoso Shipping Reflex<svg class="ch"><use href="#chev"/></svg></div>
<div class="sb"><svg><use href="#srch"/></svg>Search</div>
<svg class="ti" style="left:1236px"><use href="#bell"/></svg><svg class="ti" style="left:1283px"><use href="#gear"/></svg><svg class="ti" style="left:1332px"><use href="#help"/></svg><svg class="ti" style="left:1381px"><use href="#smile"/></svg>
<div class="av"><svg style="width:36px;height:36px;fill:none;stroke:#fff;stroke-width:2"><use href="#pers"/></svg></div>
<svg class="nv" style="top:65px"><use href="#home"/></svg><div class="nl" style="top:92px">Home</div>
<svg class="nv" style="top:123px"><use href="#plus"/></svg><div class="nl" style="top:149px">Create</div>
<svg class="nv" style="top:180px"><use href="#browse"/></svg><div class="nl" style="top:206px">Browse</div>
<svg class="nv" style="top:237px"><use href="#lake"/></svg><div class="nl" style="top:262px">OneLake<br>data hub</div>
<svg class="nv" style="top:308px"><use href="#mon"/></svg><div class="nl" style="top:334px">Monitoring<br>hub</div>
<div class="a" style="left:20px;top:370px;width:32px;height:2px;background:#d6d6d6"></div>
<svg class="nv" style="top:381px"><use href="#ws"/></svg><div class="nl" style="top:408px">Workspaces</div>
<svg class="nv" style="top:437px"><use href="#me"/></svg><div class="nl" style="top:464px">My<br>workspace</div>
<div class="a" style="left:2px;top:505px;width:3px;height:63px;background:#117865"></div>
<svg class="nv" style="top:512px;stroke:#117865"><use href="#bolt"/></svg><div class="nl" style="top:538px">Contoso<br>Shipping...</div>
<svg class="nv" style="top:798px;stroke:none"><use href="#da"/></svg><div class="nl" style="top:822px">Data<br>Activator</div>
<div class="wc" style="left:75px;top:65px;width:1385px;height:40px"></div>
<div class="t" style="left:91px;top:78px;font-size:13.5px"><svg><use href="#tag"/></svg>New Property</div>
<div class="t" style="left:229px;top:78px;font-size:13.5px"><svg><use href="#bolt"/></svg>New Trigger</div>
<div class="t" style="left:360px;top:78px;font-size:13.5px"><svg><use href="#custom"/></svg>Custom Actions<svg class="ch"><use href="#chev"/></svg></div>
<div class="a" style="left:525px;top:72px;width:1px;height:28px;background:#e0e0e0"></div>
<div class="t" style="left:543px;top:78px;font-size:13.5px"><svg><use href="#trash"/></svg>Delete</div>
<div class="t g" style="left:646px;top:78px;font-size:13.5px"><svg><use href="#disk"/></svg>Save</div>
<div class="a" style="left:722px;top:72px;width:1px;height:28px;background:#e0e0e0"></div>
<div class="t g" style="left:743px;top:78px;font-size:13.5px"><svg><use href="#play"/></svg>Start</div>
<div class="t g" style="left:834px;top:78px;font-size:13.5px"><svg><use href="#upd"/></svg>Update</div>
<div class="t g" style="left:939px;top:78px;font-size:13.5px"><svg><use href="#stop"/></svg>Stop</div>
<div class="t g" style="left:1030px;top:78px;font-size:13.5px"><svg><use href="#play"/></svg>Send me a test alert</div>
<div class="wc" style="left:75px;top:114px;width:255px;height:703px"></div>
<div class="t" style="left:88px;top:128px;font-size:14px">Objects</div>
<svg class="a i" style="left:303px;top:126px"><use href="#chevl"/></svg>
<div class="a" style="left:307px;top:330px;width:6px;height:445px;border-radius:3px;background:#8a8a8a"></div>
<div class="sel" style="top:529px"></div>
<div class="a" style="font-size:13px">
<div class="t" style="left:164px;top:167px"><svg><use href="#bolt"/></svg>Package humidi...</div>
<div class="t" style="left:164px;top:201px"><svg><use href="#bolt"/></svg>Package success...</div>
<div class="t" style="left:119px;top:235px"><svg class="cl"><use href="#chev"/></svg>Properties</div>
<div class="t" style="left:164px;top:268px"><svg><use href="#tag"/></svg>City</div>
<div class="t" style="left:164px;top:302px"><svg><use href="#tag"/></svg>Special care</div>
<div class="t" style="left:119px;top:336px"><svg class="cl"><use href="#chev"/></svg>Events</div>
<div class="t" style="left:164px;top:369px"><svg><use href="#grid"/></svg>Package Deliver...</div>
<div class="t" style="left:164px;top:403px"><svg><use href="#grid"/></svg>Package In Transit</div>
<div class="t" style="left:164px;top:438px"><svg><use href="#grid"/></svg>Package Shipped</div>
<div class="t" style="left:96px;top:472px"><svg class="cl"><use href="#chev"/></svg><svg><use href="#obj"/></svg>Redmond Packages</div>
<div class="t" style="left:119px;top:504px"><svg class="cl"><use href="#chev"/></svg>Triggers</div>
<div class="t" style="left:164px;top:536px"><svg><use href="#boltf"/></svg>Medicine ...<svg style="margin-left:16px"><use href="#dots"/></svg></div>
<div class="t" style="left:119px;top:571px"><svg class="cl"><use href="#chev"/></svg>Properties</div>
<div class="t" style="left:164px;top:603px"><svg><use href="#tag"/></svg>City</div>
<div class="t" style="left:164px;top:637px"><svg><use href="#tag"/></svg>ColdChainType</div>
<div class="t" style="left:164px;top:672px"><svg><use href="#tag"/></svg>SpecialCare</div>
<div class="t" style="left:164px;top:706px"><svg><use href="#tag"/></svg>Temperature</div>
<div class="t" style="left:119px;top:740px"><svg class="cl"><use href="#chev"/></svg>Events</div>
<div class="t" style="left:164px;top:772px"><svg><use href="#grid"/></svg>Package In Transit</div>
</div>
<div class="a" style="left:332px;top:114px;width:1135px;height:703px;background:#fff"></div>
<div class="a" style="left:332px;top:162px;width:1135px;height:1px;background:#e0e0e0"></div>
<div class="t" style="left:361px;top:128px;font-size:20px;line-height:24px"><svg style="width:16px;height:16px;margin-right:12px"><use href="#boltf"/></svg>Medicine temp out of range<svg style="width:16px;height:16px;margin-left:10px"><use href="#pen"/></svg></div>
<div class="bx" style="left:1111px;top:122px;width:115px;height:33px">5 of 102 IDs<svg class="ch" style="fill:none;stroke:#424242;stroke-width:1.4"><use href="#chev"/></svg></div>
<div class="bx" style="left:1241px;top:122px;width:152px;height:33px"><svg class="i"><use href="#cal"/></svg>Last 24 Hours<svg class="ch" style="fill:none;stroke:#424242;stroke-width:1.4"><use href="#chev"/></svg></div>
<svg class="a i" style="left:1416px;top:130px;width:17px;height:17px"><use href="#pause"/></svg>
<div class="a" style="left:358px;top:182px;width:1079px;height:486px;border:2px solid #8cbfb3;border-radius:4px"></div>
<div class="band" style="left:360px;top:184px;width:1075px;height:39px"></div>
<div class="t" style="left:371px;top:195px;font-size:13px"><svg><use href="#wave"/></svg>Select</div>
<div class="bx" style="left:447px;top:188px;width:262px;height:31px">Select a property or event column<svg class="cv"><use href="#chev"/></svg></div>
<svg class="a i" style="left:1377px;top:196px"><use href="#undo"/></svg><svg class="a i" style="left:1410px;top:196px"><use href="#coll"/></svg>
<div class="t" style="left:693px;top:366px;font-size:15px">Select a property or a column from an event to monitor.</div>
<div class="cd" style="left:609px;top:408px;width:280px;height:121px"></div>
<div class="t" style="left:625px;top:422px;font-size:13px">Existing property</div><svg class="a i" style="left:857px;top:422px"><use href="#tag"/></svg>
<div class="a" style="left:620px;top:440px;width:264px;height:139px;background:#fff;box-shadow:0 2px 8px rgba(0,0,0,.2);border-radius:4px"></div>
<div class="t" style="left:636px;top:454px;color:#424242">City</div>
<div class="t" style="left:636px;top:486px;color:#424242">ColdChainType</div>
<div class="t" style="left:636px;top:518px;color:#424242">SpecialCare</div>
<div class="a" style="left:625px;top:541px;width:257px;height:37px;background:#f2f2f2"></div>
<div class="t" style="left:636px;top:550px;color:#424242">Temperature</div>
<div class="rb" style="left:625px;top:541px;width:258px;height:38px"></div>
<div class="cd" style="left:906px;top:408px;width:279px;height:121px"></div>
<div class="t" style="left:922px;top:422px;font-size:13px;line-height:21px">Column from an event stream or<br>record</div>
<div class="t d" style="left:922px;top:470px;line-height:16px">Choose a column from the event stream or<br>record</div>
<div class="cd" style="left:358px;top:693px;width:1079px;height:41px"></div>
<div class="t" style="left:371px;top:705px;font-size:13px"><svg><use href="#det"/></svg><b>Detect</b>&nbsp; Please finish the previous step before you can work on this step</div>
<div class="cd" style="left:358px;top:758px;width:1079px;height:41px"></div>
<div class="t" style="left:371px;top:770px;font-size:13px"><svg><use href="#act"/></svg><b>Act</b>&nbsp; Please finish the previous step before you can work on this step</div>
<div class="t" style="left:90px;top:831px;font-size:14px;color:#424242"><svg><use href="#grid"/></svg>Data</div>
<div class="t" style="left:161px;top:831px;font-size:14px;font-weight:bold"><svg style="color:#117865"><use href="#pen"/></svg>Design</div>
<div class="a" style="left:158px;top:845px;width:75px;height:3px;background:#117865"></div>
</div>

<!-- ================= P5 ================= -->
<div class="pn" style="left:1601px;top:1086px;width:1475px;height:851px">
<svg class="a" style="left:28px;top:24px;width:16px;height:16px;color:#424242"><use href="#waf"/></svg>
<div class="t" style="left:78px;top:24px;font-size:14px">Contoso Shipping Reflex<svg class="ch"><use href="#chev"/></svg></div>
<div class="sb"><svg><use href="#srch"/></svg>Search</div>
<svg class="ti" style="left:1236px"><use href="#bell"/></svg><svg class="ti" style="left:1283px"><use href="#gear"/></svg><svg class="ti" style="left:1332px"><use href="#help"/></svg><svg class="ti" style="left:1381px"><use href="#smile"/></svg>
<div class="av"><svg style="width:36px;height:36px;fill:none;stroke:#fff;stroke-width:2"><use href="#pers"/></svg></div>
<svg class="nv" style="top:65px"><use href="#home"/></svg><div class="nl" style="top:92px">Home</div>
<svg class="nv" style="top:123px"><use href="#plus"/></svg><div class="nl" style="top:149px">Create</div>
<svg class="nv" style="top:180px"><use href="#browse"/></svg><div class="nl" style="top:206px">Browse</div>
<svg class="nv" style="top:237px"><use href="#lake"/></svg><div class="nl" style="top:262px">OneLake<br>data hub</div>
<svg class="nv" style="top:308px"><use href="#mon"/></svg><div class="nl" style="top:334px">Monitoring<br>hub</div>
<div class="a" style="left:20px;top:370px;width:32px;height:2px;background:#d6d6d6"></div>
<svg class="nv" style="top:381px"><use href="#ws"/></svg><div class="nl" style="top:408px">Workspaces</div>
<svg class="nv" style="top:437px"><use href="#me"/></svg><div class="nl" style="top:464px">My<br>workspace</div>
<div class="a" style="left:2px;top:505px;width:3px;height:63px;background:#117865"></div>
<svg class="nv" style="top:512px;stroke:#117865"><use href="#bolt"/></svg><div class="nl" style="top:538px">Contoso<br>Shipping...</div>
<svg class="nv" style="top:798px;stroke:none"><use href="#da"/></svg><div class="nl" style="top:822px">Data<br>Activator</div>
<div class="wc" style="left:75px;top:65px;width:1385px;height:40px"></div>
<div class="t" style="left:91px;top:78px;font-size:13.5px"><svg><use href="#tag"/></svg>New Property</div>
<div class="t" style="left:229px;top:78px;font-size:13.5px"><svg><use href="#bolt"/></svg>New Trigger</div>
<div class="t" style="left:360px;top:78px;font-size:13.5px"><svg><use href="#custom"/></svg>Custom Actions<svg class="ch"><use href="#chev"/></svg></div>
<div class="a" style="left:525px;top:72px;width:1px;height:28px;background:#e0e0e0"></div>
<div class="t" style="left:543px;top:78px;font-size:13.5px"><svg><use href="#trash"/></svg>Delete</div>
<div class="t" style="left:646px;top:78px;font-size:13.5px"><svg><use href="#disk"/></svg>Save</div>
<div class="a" style="left:722px;top:72px;width:1px;height:28px;background:#e0e0e0"></div>
<div class="t g" style="left:743px;top:78px;font-size:13.5px"><svg><use href="#play"/></svg>Start</div>
<div class="t g" style="left:834px;top:78px;font-size:13.5px"><svg><use href="#upd"/></svg>Update</div>
<div class="t g" style="left:939px;top:78px;font-size:13.5px"><svg><use href="#stop"/></svg>Stop</div>
<div class="t g" style="left:1030px;top:78px;font-size:13.5px"><svg><use href="#play"/></svg>Send me a test alert</div>
<div class="wc" style="left:75px;top:114px;width:255px;height:703px"></div>
<div class="t" style="left:88px;top:128px;font-size:14px">Objects</div>
<svg class="a i" style="left:303px;top:126px"><use href="#chevl"/></svg>
<div class="a" style="left:307px;top:185px;width:6px;height:440px;border-radius:3px;background:#8a8a8a"></div>
<div class="sel" style="top:734px"></div>
<div class="a" style="font-size:13px">
<div class="t" style="left:96px;top:171px"><svg class="cl"><use href="#chev"/></svg><svg><use href="#obj"/></svg>Package</div>
<div class="t" style="left:119px;top:203px"><svg class="cl"><use href="#chev"/></svg>Triggers</div>
<div class="t" style="left:164px;top:235px"><svg><use href="#bolt"/></svg>Average Redmo...</div>
<div class="t" style="left:164px;top:269px"><svg><use href="#bolt"/></svg>Medicine packa...</div>
<div class="t" style="left:164px;top:303px"><svg><use href="#bolt"/></svg>Package deliver...</div>
<div class="t" style="left:164px;top:338px"><svg><use href="#bolt"/></svg>Package deliver...</div>
<div class="t" style="left:164px;top:372px"><svg><use href="#bolt"/></svg>Package humidi...</div>
<div class="t" style="left:164px;top:407px"><svg><use href="#bolt"/></svg>Package success...</div>
<div class="t" style="left:119px;top:441px"><svg class="cl"><use href="#chev"/></svg>Properties</div>
<div class="t" style="left:164px;top:473px"><svg><use href="#tag"/></svg>City</div>
<div class="t" style="left:164px;top:507px"><svg><use href="#tag"/></svg>Special care</div>
<div class="t" style="left:119px;top:541px"><svg class="cl"><use href="#chev"/></svg>Events</div>
<div class="t" style="left:164px;top:574px"><svg><use href="#grid"/></svg>Package Deliver...</div>
<div class="t" style="left:164px;top:608px"><svg><use href="#grid"/></svg>Package In Transit</div>
<div class="t" style="left:164px;top:643px"><svg><use href="#grid"/></svg>Package Shipped</div>
<div class="t" style="left:96px;top:677px"><svg class="cl"><use href="#chev"/></svg><svg><use href="#obj"/></svg>Redmond Packages</div>
<div class="t" style="left:119px;top:709px"><svg class="cl"><use href="#chev"/></svg>Triggers</div>
<div class="t" style="left:164px;top:741px"><svg><use href="#boltf"/></svg>Medicine ...<svg style="margin-left:16px"><use href="#dots"/></svg></div>
<div class="t" style="left:119px;top:776px"><svg class="cl"><use href="#chev"/></svg>Properties</div>
</div>
<div class="a" style="left:332px;top:114px;width:1135px;height:703px;background:#fff"></div>
<div class="a" style="left:332px;top:162px;width:1135px;height:1px;background:#e0e0e0"></div>
<div class="t" style="left:361px;top:128px;font-size:20px;line-height:24px"><svg style="width:16px;height:16px;margin-right:12px"><use href="#boltf"/></svg>Medicine temp out of range<svg style="width:16px;height:16px;margin-left:10px"><use href="#pen"/></svg></div>
<div class="bx" style="left:1110px;top:122px;width:115px;height:33px">5 of 106 IDs<svg class="ch" style="fill:none;stroke:#424242;stroke-width:1.4"><use href="#chev"/></svg></div>
<div class="bx" style="left:1240px;top:122px;width:152px;height:33px"><svg class="i"><use href="#cal"/></svg>Last 24 Hours<svg class="ch" style="fill:none;stroke:#424242;stroke-width:1.4"><use href="#chev"/></svg></div>
<svg class="a i" style="left:1414px;top:130px;width:17px;height:17px"><use href="#pause"/></svg>
<div class="cd" style="left:358px;top:140px;width:1062px;height:84px;z-index:0;border-top:none"></div>
<div class="a" style="left:332px;top:114px;width:1135px;height:48px;background:#fff"></div>
<div class="t" style="left:361px;top:128px;font-size:20px;line-height:24px"><svg style="width:16px;height:16px;margin-right:12px"><use href="#boltf"/></svg>Medicine temp out of range<svg style="width:16px;height:16px;margin-left:10px"><use href="#pen"/></svg></div>
<div class="bx" style="left:1110px;top:122px;width:115px;height:33px">5 of 106 IDs<svg class="ch" style="fill:none;stroke:#424242;stroke-width:1.4"><use href="#chev"/></svg></div>
<div class="bx" style="left:1240px;top:122px;width:152px;height:33px"><svg class="i"><use href="#cal"/></svg>Last 24 Hours<svg class="ch" style="fill:none;stroke:#424242;stroke-width:1.4"><use href="#chev"/></svg></div>
<svg class="a i" style="left:1414px;top:130px;width:17px;height:17px"><use href="#pause"/></svg>
<div class="a" style="left:332px;top:162px;width:1135px;height:1px;background:#e0e0e0"></div>
<svg class="a" style="left:0;top:0;width:1475px;height:851px" viewBox="0 0 1475 851">
<path d="M410 165H1395" stroke="#cfd6f5" stroke-width="2"/>
<g class="ax" text-anchor="middle"><text x="422" y="184">06:00</text><text x="504" y="184">08:00</text><text x="585" y="184">10:00</text><text x="667" y="184">12:00</text><text x="748" y="184">14:00</text><text x="830" y="184">16:00</text><text x="912" y="184">18:00</text><text x="993" y="184">20:00</text><text x="1075" y="184">22:00</text><text x="1156" y="184">2. Oct</text><text x="1238" y="184">02:00</text><text x="1320" y="184">04:00</text></g>
</svg>
<div class="a" style="left:358px;top:249px;width:1062px;height:487px;border:2px solid #8cbfb3;border-radius:4px"></div>
<div class="band" style="left:360px;top:251px;width:1058px;height:39px"></div>
<div class="t" style="left:372px;top:262px;font-size:13px"><svg><use href="#det"/></svg><b>Detect</b></div>
<div class="bx" style="left:451px;top:255px;width:215px;height:31px">Choose a type of detection<svg class="cv"><use href="#chev"/></svg></div>
<svg class="a i" style="left:1361px;top:263px"><use href="#undo"/></svg><svg class="a i" style="left:1393px;top:263px"><use href="#coll"/></svg>
<div class="t" style="left:791px;top:432px;font-size:15px">Choose a type of detection</div>
<div class="cd" style="left:455px;top:474px;width:279px;height:122px"></div>
<div class="t" style="left:470px;top:489px">Numeric</div><svg class="a i" style="left:700px;top:489px"><use href="#custom"/></svg>
<div class="cd" style="left:750px;top:474px;width:278px;height:122px"></div>
<div class="t" style="left:765px;top:489px">Logical</div><svg class="a i" style="left:996px;top:489px"><use href="#cal"/></svg>
<div class="t d" style="left:765px;top:516px;line-height:17px">Trigger an action when something<br>changes over time.</div>
<div class="cd" style="left:1045px;top:474px;width:280px;height:122px"></div>
<div class="t" style="left:1060px;top:489px">Common</div><svg class="a i" style="left:1293px;top:489px"><use href="#wave"/></svg>
<div class="t d" style="left:1060px;top:516px;line-height:16.5px">Trigger an action when there is a<br>change in condition e.g. from true to<br>false.</div>
<div class="cd" style="left:358px;top:760px;width:1062px;height:41px"></div>
<div class="t" style="left:371px;top:772px;font-size:13px"><svg><use href="#act"/></svg><b>Act</b>&nbsp; Please finish the previous step before you can work on this step</div>
<div class="a" style="left:463px;top:508px;width:263px;height:332px;background:#fff;box-shadow:0 2px 8px rgba(0,0,0,.25);border-radius:4px"></div>
<div class="a" style="left:465px;top:673px;width:260px;height:34px;background:#f2f2f2"></div>
<div class="a" style="left:480px;top:513px;font-size:12.5px;color:#424242;line-height:32.3px">
<div>Becomes greater than</div><div>Becomes greater than or equal</div><div>Becomes less than</div><div>Becomes less than or equal</div><div>Enters range</div><div>Exits range</div><div>Is greater than</div><div>Is greater than or equal</div><div>Is less than</div><div>Is less than or equal</div>
</div>
<div class="rb" style="left:465px;top:673px;width:261px;height:35px"></div>
<div class="a" style="left:1450px;top:400px;width:6px;height:397px;border-radius:3px;background:#8a8a8a"></div>
<div class="t" style="left:90px;top:831px;font-size:14px;color:#424242"><svg><use href="#grid"/></svg>Data</div>
<div class="t" style="left:161px;top:831px;font-size:14px;font-weight:bold"><svg style="color:#117865"><use href="#pen"/></svg>Design</div>
<div class="a" style="left:158px;top:845px;width:75px;height:3px;background:#117865"></div>
</div>

<!-- ================= P6 ================= -->
<div class="pn" style="left:3123px;top:1086px;width:1475px;height:851px">
<svg class="a" style="left:28px;top:24px;width:16px;height:16px;color:#424242"><use href="#waf"/></svg>
<div class="t" style="left:78px;top:24px;font-size:14px">Contoso Shipping Reflex<svg class="ch"><use href="#chev"/></svg></div>
<div class="sb"><svg><use href="#srch"/></svg>Search</div>
<svg class="ti" style="left:1236px"><use href="#bell"/></svg><svg class="ti" style="left:1283px"><use href="#gear"/></svg><svg class="ti" style="left:1332px"><use href="#help"/></svg><svg class="ti" style="left:1381px"><use href="#smile"/></svg>
<div class="av"><svg style="width:36px;height:36px;fill:none;stroke:#fff;stroke-width:2"><use href="#pers"/></svg></div>
<svg class="nv" style="top:65px"><use href="#home"/></svg><div class="nl" style="top:92px">Home</div>
<svg class="nv" style="top:123px"><use href="#plus"/></svg><div class="nl" style="top:149px">Create</div>
<svg class="nv" style="top:180px"><use href="#browse"/></svg><div class="nl" style="top:206px">Browse</div>
<svg class="nv" style="top:237px"><use href="#lake"/></svg><div class="nl" style="top:262px">OneLake<br>data hub</div>
<svg class="nv" style="top:308px"><use href="#mon"/></svg><div class="nl" style="top:334px">Monitoring<br>hub</div>
<div class="a" style="left:20px;top:370px;width:32px;height:2px;background:#d6d6d6"></div>
<svg class="nv" style="top:381px"><use href="#ws"/></svg><div class="nl" style="top:408px">Workspaces</div>
<svg class="nv" style="top:437px"><use href="#me"/></svg><div class="nl" style="top:464px">My<br>workspace</div>
<div class="a" style="left:2px;top:505px;width:3px;height:63px;background:#117865"></div>
<svg class="nv" style="top:512px;stroke:#117865"><use href="#bolt"/></svg><div class="nl" style="top:538px">Contoso<br>Shipping...</div>
<svg class="nv" style="top:790px;stroke:none"><use href="#da"/></svg><div class="nl" style="top:814px">Data<br>Activator</div>
<div class="wc" style="left:75px;top:65px;width:1388px;height:40px"></div>
<div class="t" style="left:92px;top:78px;font-size:13.5px"><svg><use href="#tag"/></svg>New Property</div>
<div class="t" style="left:231px;top:78px;font-size:13.5px"><svg><use href="#bolt"/></svg>New Trigger</div>
<div class="t" style="left:363px;top:78px;font-size:13.5px"><svg><use href="#custom"/></svg>Custom Actions<svg class="ch"><use href="#chev"/></svg></div>
<div class="a" style="left:527px;top:72px;width:1px;height:28px;background:#e0e0e0"></div>
<div class="t" style="left:546px;top:78px;font-size:13.5px"><svg><use href="#trash"/></svg>Delete</div>
<div class="t" style="left:649px;top:78px;font-size:13.5px"><svg><use href="#disk"/></svg>Save</div>
<div class="a" style="left:725px;top:72px;width:1px;height:28px;background:#e0e0e0"></div>
<div class="t g" style="left:746px;top:78px;font-size:13.5px"><svg><use href="#play"/></svg>Start</div>
<div class="t g" style="left:836px;top:78px;font-size:13.5px"><svg><use href="#upd"/></svg>Update</div>
<div class="t g" style="left:944px;top:78px;font-size:13.5px"><svg><use href="#stop"/></svg>Stop</div>
<div class="t g" style="left:1035px;top:78px;font-size:13.5px"><svg><use href="#play"/></svg>Send me a test alert</div>
<div class="wc" style="left:75px;top:114px;width:257px;height:695px"></div>
<div class="t" style="left:88px;top:128px;font-size:14px">Objects</div>
<svg class="a i" style="left:305px;top:126px"><use href="#chevl"/></svg>
<div class="a" style="left:309px;top:185px;width:6px;height:430px;border-radius:3px;background:#8a8a8a"></div>
<div class="sel" style="top:737px;width:214px"></div>
<div class="a" style="font-size:13px">
<div class="t" style="left:97px;top:171px"><svg class="cl"><use href="#chev"/></svg><svg><use href="#obj"/></svg>Package</div>
<div class="t" style="left:120px;top:204px"><svg class="cl"><use href="#chev"/></svg>Triggers</div>
<div class="t" style="left:165px;top:236px"><svg><use href="#bolt"/></svg>Average Redmo...</div>
<div class="t" style="left:165px;top:270px"><svg><use href="#bolt"/></svg>Medicine packa...</div>
<div class="t" style="left:165px;top:305px"><svg><use href="#bolt"/></svg>Package deliver...</div>
<div class="t" style="left:165px;top:340px"><svg><use href="#bolt"/></svg>Package deliver...</div>
<div class="t" style="left:165px;top:374px"><svg><use href="#bolt"/></svg>Package humidi...</div>
<div class="t" style="left:165px;top:408px"><svg><use href="#bolt"/></svg>Package success...</div>
<div class="t" style="left:120px;top:443px"><svg class="cl"><use href="#chev"/></svg>Properties</div>
<div class="t" style="left:165px;top:475px"><svg><use href="#tag"/></svg>City</div>
<div class="t" style="left:165px;top:510px"><svg><use href="#tag"/></svg>Special care</div>
<div class="t" style="left:120px;top:544px"><svg class="cl"><use href="#chev"/></svg>Events</div>
<div class="t" style="left:165px;top:577px"><svg><use href="#grid"/></svg>Package Deliver...</div>
<div class="t" style="left:165px;top:611px"><svg><use href="#grid"/></svg>Package In Transit</div>
<div class="t" style="left:165px;top:646px"><svg><use href="#grid"/></svg>Package Shipped</div>
<div class="t" style="left:97px;top:680px"><svg class="cl"><use href="#chev"/></svg><svg><use href="#obj"/></svg>Redmond Packages</div>
<div class="t" style="left:120px;top:712px"><svg class="cl"><use href="#chev"/></svg>Triggers</div>
<div class="t" style="left:165px;top:744px"><svg><use href="#boltf"/></svg>Medicine ...<svg style="margin-left:16px"><use href="#dots"/></svg></div>
<div class="t" style="left:120px;top:779px"><svg class="cl"><use href="#chev"/></svg>Properties</div>
</div>
<div class="a" style="left:334px;top:114px;width:1135px;height:695px;background:#fff"></div>
<div class="a" style="left:334px;top:162px;width:1135px;height:1px;background:#e0e0e0"></div>
<div class="t" style="left:364px;top:128px;font-size:20px;line-height:24px"><svg style="width:16px;height:16px;margin-right:12px"><use href="#boltf"/></svg>Medicine temp out of range<svg style="width:16px;height:16px;margin-left:10px"><use href="#pen"/></svg></div>
<div class="bx" style="left:1114px;top:122px;width:116px;height:33px">5 of 106 IDs<svg class="ch" style="fill:none;stroke:#424242;stroke-width:1.4"><use href="#chev"/></svg></div>
<div class="bx" style="left:1244px;top:122px;width:154px;height:33px"><svg class="i"><use href="#cal"/></svg>Last 24 Hours<svg class="ch" style="fill:none;stroke:#424242;stroke-width:1.4"><use href="#chev"/></svg></div>
<svg class="a i" style="left:1420px;top:130px;width:17px;height:17px"><use href="#pause"/></svg>
<div class="a" style="left:363px;top:173px;width:1063px;height:630px;border:2px solid #8cbfb3;border-radius:4px"></div>
<div class="band" style="left:365px;top:175px;width:1059px;height:170px"></div>
<div class="t" style="left:376px;top:186px;font-size:13px"><svg><use href="#det"/></svg><b>Detect</b></div>
<div class="bx" style="left:455px;top:179px;width:114px;height:30px">Exits range<svg class="cv"><use href="#chev"/></svg></div>
<svg class="a i" style="left:1366px;top:187px"><use href="#undo"/></svg><svg class="a i" style="left:1398px;top:187px"><use href="#coll"/></svg>
<div class="bx" style="left:380px;top:223px;width:160px;height:31px">Exits range<svg class="cv"><use href="#chev"/></svg></div>
<div class="bx" style="left:550px;top:223px;width:99px;height:31px">33</div>
<div class="bx" style="left:658px;top:223px;width:100px;height:31px">41</div>
<div class="bx" style="left:769px;top:223px;width:159px;height:31px">Each time<svg class="cv"><use href="#chev"/></svg></div>
<div class="bx" style="left:380px;top:264px;width:160px;height:31px">Filter<svg class="cv"><use href="#chev"/></svg></div>
<div class="bx" style="left:550px;top:264px;width:159px;height:31px">City<svg class="cv"><use href="#chev"/></svg></div>
<div class="bx" style="left:719px;top:264px;width:160px;height:31px">Equal<svg class="cv"><use href="#chev"/></svg></div>
<div class="bx" style="left:890px;top:264px;width:99px;height:31px">Redmond</div>
<div class="bx" style="left:380px;top:304px;width:160px;height:31px">Filter<svg class="cv"><use href="#chev"/></svg></div>
<div class="bx" style="left:550px;top:304px;width:159px;height:31px">SpecialCare<svg class="cv"><use href="#chev"/></svg></div>
<div class="bx" style="left:719px;top:304px;width:160px;height:31px">Equal<svg class="cv"><use href="#chev"/></svg></div>
<div class="bx" style="left:890px;top:304px;width:99px;height:31px">Medicine</div>
<div class="rb" style="left:375px;top:257px;width:623px;height:83px"></div>
<div class="bx" style="left:1381px;top:264px;width:30px;height:31px;padding:0 7px"><svg class="i" style="margin:0"><use href="#trash"/></svg></div>
<div class="bx" style="left:1274px;top:304px;width:100px;height:31px">+ Add filter</div>
<div class="bx" style="left:1381px;top:304px;width:30px;height:31px;padding:0 7px"><svg class="i" style="margin:0"><use href="#trash"/></svg></div>
<div class="a" style="left:365px;top:344px;width:1059px;height:2px;background:#e0e0e0"></div>
<svg class="a" style="left:0;top:0;width:1475px;height:851px" viewBox="0 0 1475 851">
<g style="font:bold 11px 'Liberation Sans',sans-serif;fill:#242424"><text x="412" y="385">MFX-1073570</text><text x="533" y="385">MFX-1094903</text><text x="655" y="385">MFX-1499744</text><text x="777" y="385">MFX-1711915</text></g>
<path d="M404 377l3 4-3 4-3-4z" fill="#1a9e1a"/><path d="M525 377l3 4-3 4-3-4z" fill="#6b7fe8"/><path d="M647 377l3 4-3 4-3-4z" fill="#2a9d9a"/><path d="M769 377l3 4-3 4-3-4z" fill="#9b79d1"/>
<g class="gr"><path d="M476 405V600M560 405V600M644 405V600M728 405V600M812 405V600M896 405V600M980 405V600M1064 405V600M1148 405V600M1232 405V600M1316 405V600"/></g>
<g stroke="#e3e3e3" stroke-width="3"><path d="M390 405H1399M390 454H1399M390 503H1399M390 551H1399M390 600H1399"/></g>
<path d="M1368 450l3 4-3 4-3-4z" fill="#1a9e1a"/><path d="M1323 499l3 4-3 4-3-4z" fill="#9b79d1"/><path d="M1312 547l3 4-3 4-3-4z" fill="#2a9d9a"/><path d="M1221 596l3 4-3 4-3-4z" fill="#6b7fe8"/>
<g class="ax" text-anchor="middle"><text x="402" y="620">06:00</text><text x="476" y="620">08:00</text><text x="560" y="620">10:00</text><text x="644" y="620">12:00</text><text x="728" y="620">14:00</text><text x="812" y="620">16:00</text><text x="896" y="620">18:00</text><text x="980" y="620">20:00</text><text x="1064" y="620">22:00</text><text x="1148" y="620">2. Oct</text><text x="1232" y="620">02:00</text><text x="1316" y="620">04:00</text></g>
<text x="390" y="672" style="font:13px 'Liberation Sans',sans-serif;fill:#242424">Trigger activations</text>
<g class="gr"><path d="M410 696H1399M439 696V753M518 696V753M597 696V753M676 696V753M755 696V753M834 696V753M913 696V753M992 696V753M1071 696V753M1150 696V753M1229 696V753M1308 696V753M1383 696V753"/></g>
<path d="M410 753H1399" stroke="#cfd6f5" stroke-width="1.5"/>
<g class="ax" text-anchor="end"><text x="401" y="700">16</text><text x="401" y="757">0</text></g>
<g fill="#5b6ee1"><rect x="1178" y="743" width="18" height="10"/><rect x="1216" y="717" width="19" height="36"/><rect x="1257" y="725" width="18" height="28"/><rect x="1296" y="710" width="18" height="43"/><rect x="1333" y="700" width="19" height="53"/></g>
<g class="ax" text-anchor="middle"><text x="439" y="772">06:00</text><text x="518" y="772">08:00</text><text x="597" y="772">10:00</text><text x="676" y="772">12:00</text><text x="755" y="772">14:00</text><text x="834" y="772">16:00</text><text x="913" y="772">18:00</text><text x="992" y="772">20:00</text><text x="1071" y="772">22:00</text><text x="1150" y="772">2. Oct</text><text x="1229" y="772">02:00</text><text x="1308" y="772">04:00</text><text x="1383" y="772">06:00</text></g>
</svg>
<div class="a" style="left:1456px;top:350px;width:6px;height:240px;border-radius:3px;background:#8a8a8a"></div>
<div class="t" style="left:92px;top:823px;font-size:14px;color:#424242"><svg><use href="#grid"/></svg>Data</div>
<div class="t" style="left:163px;top:823px;font-size:14px;font-weight:bold"><svg style="color:#117865"><use href="#pen"/></svg>Design</div>
<div class="a" style="left:160px;top:838px;width:75px;height:3px;background:#117865"></div>
</div>

<!-- ================= P7 ================= -->
<div class="pn" style="left:79px;top:2100px;width:1474px;height:836px">
<svg class="a" style="left:28px;top:25px;width:16px;height:16px;color:#424242"><use href="#waf"/></svg>
<div class="t" style="left:78px;top:25px;font-size:14px">Contoso Shipping Reflex<svg class="ch"><use href="#chev"/></svg></div>
<div class="sb" style="left:542px;top:16px;width:387px;height:32px"><svg><use href="#srch"/></svg>Search</div>
<svg class="ti" style="left:1230px;top:24px"><use href="#bell"/></svg><svg class="ti" style="left:1279px;top:24px"><use href="#gear"/></svg><svg class="ti" style="left:1328px;top:24px"><use href="#help"/></svg><svg class="ti" style="left:1378px;top:24px"><use href="#smile"/></svg>
<div class="av" style="left:1422px;top:15px"><svg style="width:36px;height:36px;fill:none;stroke:#fff;stroke-width:2"><use href="#pers"/></svg></div>
<svg class="nv" style="top:67px"><use href="#home"/></svg><div class="nl" style="top:93px">Home</div>
<svg class="nv" style="top:125px"><use href="#plus"/></svg><div class="nl" style="top:151px">Create</div>
<svg class="nv" style="top:183px"><use href="#browse"/></svg><div class="nl" style="top:208px">Browse</div>
<svg class="nv" style="top:240px"><use href="#lake"/></svg><div class="nl" style="top:265px">OneLake<br>data hub</div>
<svg class="nv" style="top:313px"><use href="#mon"/></svg><div class="nl" style="top:338px">Monitoring<br>hub</div>
<div class="a" style="left:20px;top:375px;width:32px;height:2px;background:#d6d6d6"></div>
<svg class="nv" style="top:387px"><use href="#ws"/></svg><div class="nl" style="top:414px">Workspaces</div>
<svg class="nv" style="top:445px"><use href="#me"/></svg><div class="nl" style="top:472px">My<br>workspace</div>
<div class="a" style="left:2px;top:515px;width:3px;height:65px;background:#117865"></div>
<svg class="nv" style="top:522px;stroke:#117865"><use href="#bolt"/></svg><div class="nl" style="top:548px">Contoso<br>Shipping...</div>
<svg class="nv" style="top:777px;stroke:none"><use href="#da"/></svg><div class="nl" style="top:802px">Data<br>Activator</div>
<div class="wc" style="left:75px;top:67px;width:1385px;height:41px"></div>
<div class="t" style="left:92px;top:80px;font-size:13.5px"><svg><use href="#tag"/></svg>New Property</div>
<div class="t" style="left:233px;top:80px;font-size:13.5px"><svg><use href="#bolt"/></svg>New Trigger</div>
<div class="t" style="left:366px;top:80px;font-size:13.5px"><svg><use href="#custom"/></svg>Custom Actions<svg class="ch"><use href="#chev"/></svg></div>
<div class="a" style="left:536px;top:73px;width:1px;height:28px;background:#e0e0e0"></div>
<div class="t" style="left:554px;top:80px;font-size:13.5px"><svg><use href="#trash"/></svg>Delete</div>
<div class="t" style="left:659px;top:80px;font-size:13.5px"><svg><use href="#disk"/></svg>Save</div>
<div class="a" style="left:735px;top:73px;width:1px;height:28px;background:#e0e0e0"></div>
<div class="t g" style="left:759px;top:80px;font-size:13.5px"><svg><use href="#play"/></svg>Start</div>
<div class="t g" style="left:851px;top:80px;font-size:13.5px"><svg><use href="#upd"/></svg>Update</div>
<div class="t g" style="left:960px;top:80px;font-size:13.5px"><svg><use href="#stop"/></svg>Stop</div>
<div class="t g" style="left:1051px;top:80px;font-size:13.5px"><svg><use href="#play"/></svg>Send me a test alert</div>
<div class="wc" style="left:75px;top:117px;width:262px;height:680px"></div>
<div class="t" style="left:88px;top:131px;font-size:14px">Objects</div>
<svg class="a i" style="left:309px;top:129px"><use href="#chevl"/></svg>
<div class="a" style="left:313px;top:245px;width:6px;height:395px;border-radius:3px;background:#8a8a8a"></div>
<div class="sel" style="top:669px;width:218px;height:33px"></div>
<div class="a" style="left:75px;top:150px;width:240px;height:640px;overflow:hidden;font-size:13px">
<div class="t" style="left:92px;top:9px"><svg><use href="#bolt"/></svg>Average Redmo...</div>
<div class="t" style="left:92px;top:43px"><svg><use href="#bolt"/></svg>Medicine packa...</div>
<div class="t" style="left:92px;top:78px"><svg><use href="#bolt"/></svg>Package deliver...</div>
<div class="t" style="left:92px;top:114px"><svg><use href="#bolt"/></svg>Package deliver...</div>
<div class="t" style="left:92px;top:149px"><svg><use href="#bolt"/></svg>Package humidi...</div>
<div class="t" style="left:92px;top:184px"><svg><use href="#bolt"/></svg>Package success...</div>
<div class="t" style="left:47px;top:219px"><svg class="cl"><use href="#chev"/></svg>Properties</div>
<div class="t" style="left:92px;top:252px"><svg><use href="#tag"/></svg>City</div>
<div class="t" style="left:92px;top:287px"><svg><use href="#tag"/></svg>Special care</div>
<div class="t" style="left:47px;top:322px"><svg class="cl"><use href="#chev"/></svg>Events</div>
<div class="t" style="left:92px;top:355px"><svg><use href="#grid"/></svg>Package Deliver...</div>
<div class="t" style="left:92px;top:390px"><svg><use href="#grid"/></svg>Package In Transit</div>
<div class="t" style="left:92px;top:426px"><svg><use href="#grid"/></svg>Package Shipped</div>
<div class="t" style="left:24px;top:460px"><svg class="cl"><use href="#chev"/></svg><svg><use href="#obj"/></svg>Redmond Packages</div>
<div class="t" style="left:47px;top:494px"><svg class="cl"><use href="#chev"/></svg>Triggers</div>
<div class="t" style="left:92px;top:527px"><svg><use href="#boltf"/></svg>Medicine ...<svg style="margin-left:16px"><use href="#dots"/></svg></div>
<div class="t" style="left:47px;top:562px"><svg class="cl"><use href="#chev"/></svg>Properties</div>
<div class="t" style="left:92px;top:595px"><svg><use href="#tag"/></svg>City</div>
</div>
<div class="a" style="left:339px;top:117px;width:1128px;height:680px;background:#fff"></div>
<div class="a" style="left:368px;top:167px;width:1048px;height:90px;border:2px solid #8cbfb3;border-top:none;border-radius:0 0 4px 4px"></div>
<svg class="a" style="left:0;top:0;width:1474px;height:836px" viewBox="0 0 1474 836">
<g class="gr"><path d="M446 167V205M562 167V205M678 167V205M793 167V205M909 167V205M1025 167V205M1141 167V205M1256 167V205M1372 167V205"/></g>
<path d="M420 205H1390" stroke="#cfd6f5" stroke-width="1.5"/>
<text class="ax" x="406" y="209" text-anchor="end">0</text>
<g fill="#5b6ee1"><rect x="1288" y="167" width="17" height="38"/><rect x="1325" y="167" width="17" height="38"/></g>
<g class="ax" text-anchor="middle"><text x="446" y="224">06:00</text><text x="562" y="224">09:00</text><text x="678" y="224">12:00</text><text x="793" y="224">15:00</text><text x="909" y="224">18:00</text><text x="1025" y="224">21:00</text><text x="1141" y="224">2. Oct</text><text x="1256" y="224">03:00</text><text x="1372" y="224">06:00</text></g>
</svg>
<div class="a" style="left:339px;top:117px;width:1128px;height:50px;background:#fff;border-bottom:1px solid #e0e0e0"></div>
<div class="t" style="left:368px;top:131px;font-size:20px;line-height:24px"><svg style="width:16px;height:16px;margin-right:12px"><use href="#boltf"/></svg>Medicine temp out of range<svg style="width:16px;height:16px;margin-left:10px"><use href="#pen"/></svg></div>
<div class="bx" style="left:1097px;top:125px;width:118px;height:31px">5 of 106 IDs<svg class="ch" style="fill:none;stroke:#424242;stroke-width:1.4"><use href="#chev"/></svg></div>
<div class="bx" style="left:1230px;top:125px;width:159px;height:31px"><svg class="i"><use href="#cal"/></svg>Last 24 Hours<svg class="ch" style="fill:none;stroke:#424242;stroke-width:1.4"><use href="#chev"/></svg></div>
<svg class="a i" style="left:1410px;top:133px;width:17px;height:17px"><use href="#pause"/></svg>
<div class="cd" style="left:368px;top:281px;width:1048px;height:497px"></div>
<div class="band" style="left:369px;top:282px;width:1046px;height:41px"></div>
<div class="t" style="left:380px;top:295px;font-size:13px"><svg><use href="#act"/></svg><b>Act</b></div>
<div class="bx" style="left:440px;top:287px;width:148px;height:31px">Select an action<svg class="cv"><use href="#chev"/></svg></div>
<svg class="a i" style="left:1357px;top:296px"><use href="#undo"/></svg><svg class="a i" style="left:1389px;top:296px"><use href="#coll"/></svg>
<div class="t" style="left:733px;top:470px;font-size:15px">Select an action to perform after detection</div>
<div class="cd" style="left:446px;top:512px;width:288px;height:126px"></div>
<div class="t" style="left:462px;top:528px">Email</div><svg class="a i" style="left:706px;top:528px"><use href="#mail"/></svg>
<div class="t d" style="left:462px;top:556px">Get notified by email.</div>
<div class="rb" style="left:438px;top:506px;width:301px;height:137px"></div>
<div class="cd" style="left:750px;top:512px;width:286px;height:126px"></div>
<div class="t" style="left:765px;top:528px">Teams message</div><svg class="a" style="left:1001px;top:528px;width:16px;height:16px"><use href="#teams"/></svg>
<div class="t d" style="left:765px;top:556px;line-height:17px">Send notifications to an individual or a<br>channel in Teams.</div>
<div class="a" style="left:1053px;top:512px;width:287px;height:126px;background:#f3f3f3;border-radius:4px;box-shadow:0 1px 3px rgba(0,0,0,.1)"></div>
<div class="t" style="left:1069px;top:528px;color:#bdbdbd">Custom action</div><svg class="a i" style="left:1311px;top:528px;color:#c8c8c8"><use href="#custom"/></svg>
<div class="t d" style="left:1069px;top:556px;line-height:17px;color:#c4c4c4">To create a new custom action, use the<br>ribbon above</div>
<div class="a" style="left:1449px;top:555px;width:6px;height:220px;border-radius:3px;background:#8a8a8a"></div>
<div class="t" style="left:93px;top:811px;font-size:14px;color:#424242"><svg><use href="#grid"/></svg>Data</div>
<div class="t" style="left:166px;top:811px;font-size:14px;font-weight:bold"><svg style="color:#117865"><use href="#pen"/></svg>Design</div>
<div class="a" style="left:163px;top:826px;width:75px;height:3px;background:#117865"></div>
</div>

<!-- ================= P8 ================= -->
<div class="pn" style="left:1601px;top:2100px;width:1475px;height:836px">
<svg class="a" style="left:28px;top:25px;width:16px;height:16px;color:#424242"><use href="#waf"/></svg>
<div class="t" style="left:78px;top:25px;font-size:14px">Contoso Shipping Reflex<svg class="ch"><use href="#chev"/></svg></div>
<div class="sb" style="left:542px;top:16px;width:387px;height:32px"><svg><use href="#srch"/></svg>Search</div>
<svg class="ti" style="left:1229px;top:24px"><use href="#bell"/></svg><svg class="ti" style="left:1278px;top:24px"><use href="#gear"/></svg><svg class="ti" style="left:1327px;top:24px"><use href="#help"/></svg><svg class="ti" style="left:1377px;top:24px"><use href="#smile"/></svg>
<div class="av" style="left:1421px;top:15px"><svg style="width:36px;height:36px;fill:none;stroke:#fff;stroke-width:2"><use href="#pers"/></svg></div>
<svg class="nv" style="top:67px"><use href="#home"/></svg><div class="nl" style="top:93px">Home</div>
<svg class="nv" style="top:125px"><use href="#plus"/></svg><div class="nl" style="top:151px">Create</div>
<svg class="nv" style="top:183px"><use href="#browse"/></svg><div class="nl" style="top:208px">Browse</div>
<svg class="nv" style="top:240px"><use href="#lake"/></svg><div class="nl" style="top:265px">OneLake<br>data hub</div>
<svg class="nv" style="top:313px"><use href="#mon"/></svg><div class="nl" style="top:338px">Monitoring<br>hub</div>
<div class="a" style="left:20px;top:375px;width:32px;height:2px;background:#d6d6d6"></div>
<svg class="nv" style="top:387px"><use href="#ws"/></svg><div class="nl" style="top:414px">Workspaces</div>
<svg class="nv" style="top:445px"><use href="#me"/></svg><div class="nl" style="top:472px">My<br>workspace</div>
<div class="a" style="left:2px;top:515px;width:3px;height:65px;background:#117865"></div>
<svg class="nv" style="top:522px;stroke:#117865"><use href="#bolt"/></svg><div class="nl" style="top:548px">Contoso<br>Shipping...</div>
<svg class="nv" style="top:777px;stroke:none"><use href="#da"/></svg><div class="nl" style="top:802px">Data<br>Activator</div>
<div class="wc" style="left:75px;top:67px;width:1385px;height:41px"></div>
<div class="t" style="left:92px;top:81px;font-size:13.5px"><svg><use href="#tag"/></svg>New Property</div>
<div class="t" style="left:233px;top:81px;font-size:13.5px"><svg><use href="#bolt"/></svg>New Trigger</div>
<div class="t" style="left:366px;top:81px;font-size:13.5px"><svg><use href="#custom"/></svg>Custom Actions<svg class="ch"><use href="#chev"/></svg></div>
<div class="a" style="left:536px;top:73px;width:1px;height:28px;background:#e0e0e0"></div>
<div class="t" style="left:554px;top:81px;font-size:13.5px"><svg><use href="#trash"/></svg>Delete</div>
<div class="t g" style="left:659px;top:81px;font-size:13.5px"><svg><use href="#disk"/></svg>Save</div>
<div class="a" style="left:735px;top:73px;width:1px;height:28px;background:#e0e0e0"></div>
<div class="t g" style="left:759px;top:81px;font-size:13.5px"><svg><use href="#play"/></svg>Start</div>
<div class="t g" style="left:851px;top:81px;font-size:13.5px"><svg><use href="#upd"/></svg>Update</div>
<div class="t" style="left:960px;top:81px;font-size:13.5px"><svg><use href="#stop"/></svg>Stop</div>
<div class="t" style="left:1051px;top:81px;font-size:13.5px"><svg><use href="#play"/></svg>Send me a test alert</div>
<div class="wc" style="left:75px;top:117px;width:262px;height:680px"></div>
<div class="t" style="left:88px;top:132px;font-size:14px">Objects</div>
<svg class="a i" style="left:309px;top:130px"><use href="#chevl"/></svg>
<div class="a" style="left:313px;top:370px;width:6px;height:380px;border-radius:3px;background:#8a8a8a"></div>
<div class="sel" style="top:467px;width:218px;height:33px"></div>
<div class="a" style="font-size:13px">
<div class="t" style="left:120px;top:167px"><svg class="cl"><use href="#chev"/></svg>Properties</div>
<div class="t" style="left:165px;top:200px"><svg><use href="#tag"/></svg>City</div>
<div class="t" style="left:165px;top:235px"><svg><use href="#tag"/></svg>Special care</div>
<div class="t" style="left:120px;top:270px"><svg class="cl"><use href="#chev"/></svg>Events</div>
<div class="t" style="left:165px;top:303px"><svg><use href="#grid"/></svg>Package Deliver...</div>
<div class="t" style="left:165px;top:338px"><svg><use href="#grid"/></svg>Package In Transit</div>
<div class="t" style="left:165px;top:373px"><svg><use href="#grid"/></svg>Package Shipped</div>
<div class="t" style="left:97px;top:408px"><svg class="cl"><use href="#chev"/></svg><svg><use href="#obj"/></svg>Redmond Packages</div>
<div class="t" style="left:120px;top:442px"><svg class="cl"><use href="#chev"/></svg>Triggers</div>
<div class="t" style="left:165px;top:475px"><svg style="color:#117865"><use href="#bolt"/></svg>Medicine ...<svg style="margin-left:16px"><use href="#dots"/></svg></div>
<div class="t" style="left:120px;top:510px"><svg class="cl"><use href="#chev"/></svg>Properties</div>
<div class="t" style="left:165px;top:543px"><svg><use href="#tag"/></svg>City</div>
<div class="t" style="left:165px;top:578px"><svg><use href="#tag"/></svg>ColdChainType</div>
<div class="t" style="left:165px;top:613px"><svg><use href="#tag"/></svg>PackageId</div>
<div class="t" style="left:165px;top:648px"><svg><use href="#tag"/></svg>SpecialCare</div>
<div class="t" style="left:165px;top:683px"><svg><use href="#tag"/></svg>Temperature</div>
<div class="t" style="left:120px;top:718px"><svg class="cl"><use href="#chev"/></svg>Events</div>
<div class="t" style="left:165px;top:751px"><svg><use href="#grid"/></svg>Package In Transit</div>
</div>
<div class="a" style="left:339px;top:117px;width:1128px;height:680px;background:#fff"></div>
<div class="a" style="left:368px;top:205px;width:1047px;height:88px;border:1px solid #e3e3e3;border-top:none;box-shadow:0 1px 3px rgba(0,0,0,.12)"></div>
<svg class="a" style="left:0;top:0;width:1475px;height:836px" viewBox="0 0 1475 836">
<g class="gr"><path d="M433 205V241M548 205V241M664 205V241M780 205V241M896 205V241M1012 205V241M1128 205V241M1244 205V241M1361 205V241"/></g>
<path d="M420 241H1390" stroke="#cfd6f5" stroke-width="1.5"/>
<text class="ax" x="405" y="245" text-anchor="end">0</text>
<g fill="#5b6ee1"><rect x="1275" y="225" width="17" height="16"/><rect x="1314" y="225" width="18" height="16"/><rect x="1352" y="202" width="19" height="39"/></g>
<g class="ax" text-anchor="middle"><text x="433" y="261">06:00</text><text x="548" y="261">09:00</text><text x="664" y="261">12:00</text><text x="780" y="261">15:00</text><text x="896" y="261">18:00</text><text x="1012" y="261">21:00</text><text x="1128" y="261">2. Oct</text><text x="1244" y="261">03:00</text><text x="1361" y="261">06:00</text></g>
</svg>
<div class="a" style="left:339px;top:117px;width:1128px;height:46px;background:#fff"></div>
<div class="t" style="left:366px;top:132px;font-size:20px;line-height:24px"><svg style="width:16px;height:16px;margin-right:12px;color:#117865"><use href="#bolt"/></svg>Medicine temp out of range<svg style="width:16px;height:16px;margin-left:10px"><use href="#pen"/></svg></div>
<div class="bx" style="left:1099px;top:126px;width:116px;height:31px">5 of 118 IDs<svg class="ch" style="fill:none;stroke:#424242;stroke-width:1.4"><use href="#chev"/></svg></div>
<div class="bx" style="left:1229px;top:126px;width:158px;height:31px"><svg class="i"><use href="#cal"/></svg>Last 24 Hours<svg class="ch" style="fill:none;stroke:#424242;stroke-width:1.4"><use href="#chev"/></svg></div>
<svg class="a i" style="left:1408px;top:134px;width:17px;height:17px"><use href="#pause"/></svg>
<div class="a" style="left:339px;top:165px;width:1124px;height:38px;background:#f0f0f0"></div>
<div class="t" style="left:352px;top:177px;font-size:11px;color:#424242"><svg><use href="#info"/></svg>There is a property update available. Update now to ensure the trigger has the most recent changes.</div>
<div class="bx" style="left:1379px;top:170px;width:69px;height:29px;justify-content:center;padding:0;font-size:11.5px">Update</div>
<div class="rb" style="left:1377px;top:168px;width:74px;height:33px;border-width:1.5px"></div>
<div class="rb" style="left:337px;top:163px;width:1127px;height:42px"></div>
<div class="a" style="left:368px;top:318px;width:1047px;height:460px;border:2px solid #8cbfb3;border-radius:4px;background:#fff"></div>
<div class="band" style="left:370px;top:320px;width:1043px;height:38px"></div>
<div class="t" style="left:381px;top:331px;font-size:13px"><svg><use href="#act"/></svg><b>Act</b></div>
<div class="bx" style="left:440px;top:323px;width:117px;height:32px">Send email<svg class="cv"><use href="#chev"/></svg></div>
<svg class="a i" style="left:1353px;top:332px"><use href="#undo"/></svg><svg class="a i" style="left:1386px;top:332px"><use href="#coll"/></svg>
<div class="t" style="left:384px;top:372px;font-size:12.5px">Send to <span style="color:#c50f1f">*</span> <svg class="i" style="width:11px;height:11px"><use href="#info"/></svg></div>
<div class="bx" style="left:384px;top:392px;width:1013px;height:57px;border-bottom:2px solid #8a8a8a">
<span style="display:inline-flex;align-items:center;height:31px;border:1px solid #d1d1d1;border-radius:16px;padding:0 6px 0 4px;font-size:11.5px"><span style="display:inline-block;width:22px;height:22px;border-radius:50%;background:#c8c8c8;color:#616161;font-size:9px;line-height:22px;text-align:center;margin-right:6px">FU</span>Fabric User<span style="display:inline-block;width:15px;height:15px;border-radius:50%;background:#bdbdbd;color:#fff;font-size:10px;line-height:15px;text-align:center;margin-left:6px">✕</span></span></div>
<div class="t" style="left:384px;top:480px;font-size:12.5px">Subject <span style="color:#c50f1f">*</span> <svg class="i" style="width:11px;height:11px"><use href="#info"/></svg></div>
<div class="bx" style="left:384px;top:501px;width:1013px;height:32px;border-bottom:2px solid #8a8a8a">Redmond Medical Package outside on acceptable temperature range.</div>
<div class="t" style="left:384px;top:558px;font-size:12.5px">Headline <span style="color:#c50f1f">*</span> <svg class="i" style="width:11px;height:11px"><use href="#info"/></svg></div>
<div class="bx" style="left:384px;top:580px;width:1013px;height:32px;border-bottom:2px solid #8a8a8a">Temperature too hot or too cold</div>
<div class="t" style="left:384px;top:637px;font-size:12.5px">Optional message <svg class="i" style="width:11px;height:11px"><use href="#info"/></svg></div>
<div class="bx" style="left:384px;top:658px;width:1013px;height:32px;border-bottom:2px solid #8a8a8a"></div>
<div class="t" style="left:384px;top:715px;font-size:12.5px">Additional information <svg class="i" style="width:11px;height:11px"><use href="#info"/></svg></div>
<div class="bx" style="left:384px;top:737px;width:1013px;height:32px;border-bottom:2px solid #8a8a8a">PackageId, Temperature<svg class="cv"><use href="#chev"/></svg></div>
<div class="a" style="left:1446px;top:575px;width:6px;height:200px;border-radius:3px;background:#8a8a8a"></div>
<div class="t" style="left:93px;top:811px;font-size:14px;color:#424242"><svg><use href="#grid"/></svg>Data</div>
<div class="t" style="left:166px;top:811px;font-size:14px;font-weight:bold"><svg style="color:#117865"><use href="#pen"/></svg>Design</div>
<div class="a" style="left:163px;top:826px;width:75px;height:3px;background:#117865"></div>
</div>

<!-- ================= P9 ================= -->
<div class="a" style="left:3123px;top:2099px;width:1477px;height:836px;background:#b2b2b2;border:2px solid #1e1e1e">
<div class="a" style="left:116px;top:143px;width:1242px;height:549px;background:#fff;overflow:hidden">
<svg class="a i" style="left:25px;top:26px;width:17px;height:17px"><use href="#boltf"/></svg>
<div class="t" style="left:76px;top:22px;font-size:21px;line-height:24px">Humidity Trigger<svg style="width:16px;height:16px;margin-left:10px"><use href="#pen"/></svg></div>
<div class="bx" style="left:887px;top:15px;width:130px;height:37px">5 of 72 IDs<svg class="ch" style="fill:none;stroke:#424242;stroke-width:1.4"><use href="#chev"/></svg></div>
<div class="bx" style="left:1033px;top:15px;width:173px;height:37px"><svg class="i"><use href="#cal"/></svg>Last 4 Hours<svg class="ch" style="fill:none;stroke:#424242;stroke-width:1.4"><use href="#chev"/></svg></div>
<svg class="a i" style="left:1227px;top:25px;width:18px;height:18px"><use href="#pause"/></svg>
<div class="a" style="left:0;top:66px;width:1242px;height:1px;background:#e0e0e0"></div>
<div class="a" style="left:24px;top:88px;width:1211px;height:470px;border:1px solid #e6e6e6"></div>
<div class="band" style="left:24px;top:88px;width:1211px;height:49px"></div>
<div class="t" style="left:39px;top:104px;font-size:13.5px"><svg><use href="#wave"/></svg>Select</div>
<div class="bx" style="left:128px;top:94px;width:118px;height:37px">Humidity<svg class="ch" style="fill:none;stroke:#424242;stroke-width:1.4"><use href="#chev"/></svg></div>
<svg class="a i" style="left:1165px;top:105px;width:15px;height:15px"><use href="#undo"/></svg><svg class="a i" style="left:1202px;top:105px;width:15px;height:15px"><use href="#coll"/></svg>
<div class="bx" style="left:45px;top:146px;width:189px;height:37px;border-bottom:2px solid #8a8a8a">Package In Transit<svg class="cv"><use href="#chev"/></svg></div>
<div class="bx" style="left:244px;top:146px;width:190px;height:37px;border-bottom:2px solid #8a8a8a">Humidity<svg class="cv"><use href="#chev"/></svg></div>
<div class="bx" style="left:1100px;top:146px;width:115px;height:37px"><span style="font-size:18px;margin-right:6px;color:#424242">+</span>Add<svg class="ch" style="fill:none;stroke:#424242;stroke-width:1.4"><use href="#chev"/></svg></div>
<div class="a" style="left:24px;top:192px;width:1211px;height:2px;background:#e6e6e6"></div>
<svg class="a" style="left:0;top:0;width:1242px;height:549px" viewBox="0 0 1242 549">
<g style="font:bold 12px 'Liberation Sans',sans-serif;fill:#242424"><text x="111" y="242">MFX-3891994</text><text x="255" y="242">MFX-4754236</text><text x="398" y="242">MFX-6703410</text><text x="542" y="242">MFX-9403147</text><text x="685" y="242">MFX-9845980</text></g>
<g stroke-width="2"><path d="M93 238h14M100 232v12" stroke="#2a9d9a"/><path d="M237 238h14M244 232v12" stroke="#e3097f"/><path d="M380 238h14M387 232v12" stroke="#1a9e1a"/><path d="M524 238h14M531 232v12" stroke="#6b7fe8"/><path d="M667 238h14M674 232v12" stroke="#9b79d1"/></g>
<g stroke="#e6e6e6" stroke-width="1"><path d="M89 266H1203M89 324H1203M89 381H1203M89 439H1203"/><path d="M189 266V495M328 266V495M468 266V495M607 266V495M746 266V495M886 266V495M1025 266V495M1164 266V495"/></g>
<path d="M89 495H1203" stroke="#cfd6f5" stroke-width="1.5"/>
<g class="ax" text-anchor="end" style="font-size:11px"><text x="70" y="270">72</text><text x="70" y="328">70</text><text x="70" y="385">68</text><text x="70" y="443">66</text><text x="70" y="499">64</text></g>
<g class="ax" text-anchor="middle" style="font-size:11px"><text x="189" y="519">05:00</text><text x="328" y="519">05:30</text><text x="468" y="519">06:00</text><text x="607" y="519">06:30</text><text x="746" y="519">07:00</text><text x="886" y="519">07:30</text><text x="1025" y="519">08:00</text><text x="1164" y="519">08:30</text></g>
</svg>
<svg class="a" style="left:61px;top:257px;width:1162px;height:251px" viewBox="200 760 1150 380" preserveAspectRatio="none">
<g fill="none" stroke-width="2" vector-effect="non-scaling-stroke">
<path vector-effect="non-scaling-stroke" stroke="#2a9d9a" d="M290 861 C324 861 324 1035 358 1035 C394 1035 394 948 430 948 C463 948 463 861 497 861 L567 861 C601 861 601 948 635 948 C670 948 670 861 705 861 C739 861 739 1035 773 1035 C808 1035 808 861 843 861 L912 861 C946 861 946 948 981 948 C1015 948 1015 861 1050 861 C1085 861 1085 948 1120 948 C1154 948 1154 861 1188 861 C1223 861 1223 1035 1258 1035 C1292 1035 1292 861 1327 861"/>
<path vector-effect="non-scaling-stroke" stroke="#9b79d1" d="M291 901 C325 901 325 1075 360 1075 C395 1075 395 988 430 988 C464 988 464 901 498 901 C532 901 532 1075 567 1075 C601 1075 601 901 636 901 C671 901 671 1075 706 1075 C740 1075 740 988 775 988 C809 988 809 901 844 901 C878 901 878 861 913 861 C947 861 947 1035 982 1035 C1016 1035 1016 948 1051 948 C1085 948 1085 861 1120 861 C1154 861 1154 1035 1189 1035 C1223 1035 1223 861 1258 861 L1327 861"/>
<path vector-effect="non-scaling-stroke" stroke="#6b7fe8" d="M245 901 C279 901 279 988 314 988 C348 988 348 861 383 861 L452 861 C486 861 486 1035 521 1035 C555 1035 555 948 590 948 C624 948 624 861 659 861 L728 861 C762 861 762 948 797 948 C831 948 831 861 866 861 C900 861 900 948 935 948 C969 948 969 861 1004 861 C1038 861 1038 1035 1073 1035 C1107 1035 1107 948 1142 948 C1176 948 1176 861 1211 861 C1246 861 1246 1035 1281 1035"/>
<path vector-effect="non-scaling-stroke" stroke="#e3097f" d="M268 901 C302 901 302 988 337 988 C371 988 371 901 406 901 C440 901 440 988 475 988 C509 988 509 861 544 861 L613 861 C647 861 647 948 682 948 C716 948 716 861 751 861 C785 861 785 948 820 948 C854 948 854 861 889 861 L958 861 C993 861 993 948 1028 948 C1062 948 1062 861 1097 861 C1131 861 1131 1035 1166 1035 C1200 1035 1200 861 1235 861 C1269 861 1269 1035 1304 1035"/>
</g>
<path d="M1303 1086l4 10-4 10-4-10z" fill="#1a9e1a"/>
</svg>
</div>
</div>

</body></html>
